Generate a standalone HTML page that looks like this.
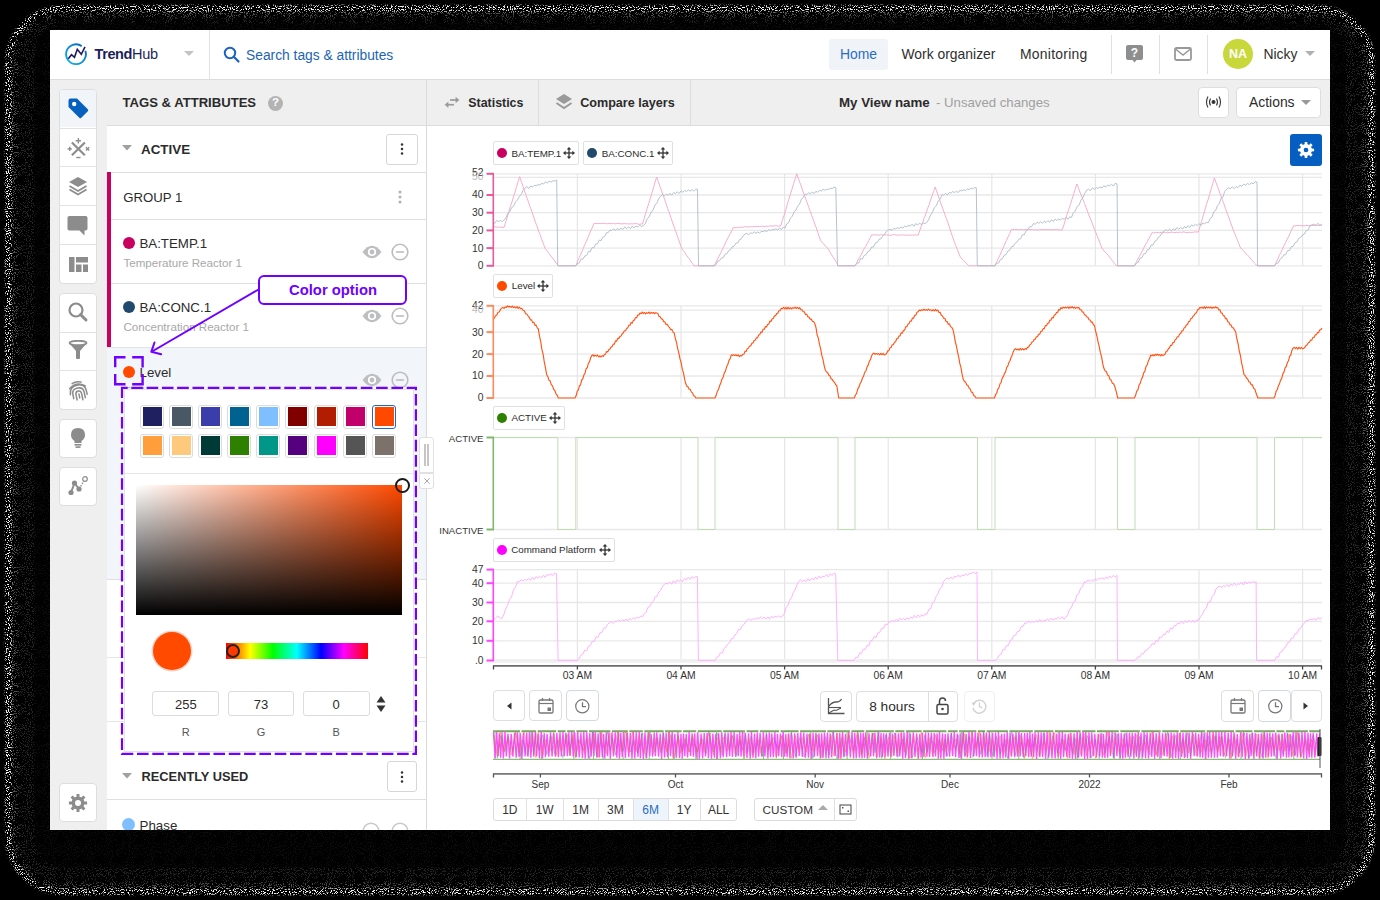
<!DOCTYPE html>
<html><head><meta charset="utf-8"><style>
html,body{margin:0;padding:0;}
body{width:1380px;height:900px;position:relative;overflow:hidden;background:#000;font-family:"Liberation Sans",sans-serif;}
.a{position:absolute;display:block;}
.t{position:absolute;white-space:nowrap;}
</style></head><body>
<svg class="a" style="left:0;top:0" width="1380" height="900" viewBox="0 0 1380 900">
<defs>
<filter id="nz" x="0" y="0" width="1380" height="900" filterUnits="userSpaceOnUse">
<feTurbulence type="fractalNoise" baseFrequency="0.95" numOctaves="2" seed="5" result="t"/>
<feColorMatrix in="t" type="matrix" values="0 0 0 0 1  0 0 0 0 1  0 0 0 0 1  14 0 0 0 -7.9"/>
</filter>
<filter id="bl" x="-5%" y="-5%" width="110%" height="110%"><feGaussianBlur stdDeviation="1.2"/></filter>
<mask id="mk" maskUnits="userSpaceOnUse" x="0" y="0" width="1380" height="900">
<g filter="url(#bl)">
<rect x="5" y="5" width="1370" height="890" rx="58" fill="#fff"/>
<rect x="11" y="11" width="1358" height="878" rx="52" fill="#505050"/>
<rect x="18" y="17" width="1344" height="866" rx="45" fill="#262626"/>
<rect x="34" y="23" width="1312" height="845" rx="30" fill="#101010"/>
</g>
</mask>
</defs>
<rect x="0" y="0" width="1380" height="900" fill="#000"/>
<g mask="url(#mk)"><rect x="0" y="0" width="1380" height="900" filter="url(#nz)"/></g>
</svg>
<div class="a" style="left:0;top:0;width:1380px;height:900px;clip-path:inset(30px 50px 70px 50px);"><div class="a" style="left:50px;top:30px;width:1280px;height:800px;background:#fff;"></div>
<div class="a" style="left:50px;top:79px;width:1280px;height:1px;background:#dcdcdc;"></div>
<svg class="a" style="left:64px;top:42px;" width="24" height="24" viewBox="0 0 24 24"><defs><linearGradient id="lg" x1="0" y1="1" x2="1" y2="0"><stop offset="0" stop-color="#16b4e2"/><stop offset="1" stop-color="#0a62c4"/></linearGradient></defs><path d="M21.3,8.8 A9.9,9.9 0 1 1 17.7,4.1" fill="none" stroke="url(#lg)" stroke-width="1.9"/><polyline points="4.3,16.7 7.5,12.7 10.5,15.3 13.3,7.3 17.3,12.3 21,4.8" fill="none" stroke="#1e1a5c" stroke-width="1.6" stroke-linejoin="miter"/></svg>
<div class="t" style="left:94.5px;top:47.43px;font-size:14.5px;line-height:14.5px;color:#1c1f5a;font-weight:400;"><b style="letter-spacing:-0.4px">Trend</b><span style="letter-spacing:-0.3px">Hub</span></div>
<svg class="a" style="left:184px;top:51px;" width="10" height="6" viewBox="0 0 10 6"><polygon points="0,0 10,0 5,5" fill="#c4c4c4"/></svg>
<div class="a" style="left:209px;top:30px;width:1px;height:49px;background:#e2e2e2;"></div>
<svg class="a" style="left:223px;top:46px;" width="18" height="18" viewBox="0 0 18 18"><circle cx="7" cy="7" r="5.2" fill="none" stroke="#1a63c0" stroke-width="2"/><line x1="10.8" y1="10.8" x2="15.5" y2="15.5" stroke="#1a63c0" stroke-width="2.2" stroke-linecap="round"/></svg>
<div class="t" style="left:246px;top:48.82px;font-size:13.8px;line-height:13.8px;color:#1d64b5;font-weight:400;">Search tags &amp; attributes</div>
<div class="a" style="left:829px;top:38.5px;width:59px;height:31.5px;background:#f0f4f9;border-radius:3px;"></div>
<div class="t" style="left:840px;top:48.23px;font-size:13.9px;line-height:13.9px;color:#2a6cc4;font-weight:400;">Home</div>
<div class="t" style="left:901.5px;top:48.23px;font-size:13.9px;line-height:13.9px;color:#2e2e2e;font-weight:400;">Work organizer</div>
<div class="t" style="left:1020px;top:48.23px;font-size:13.9px;line-height:13.9px;color:#2e2e2e;font-weight:400;letter-spacing:0.27px;">Monitoring</div>
<div class="a" style="left:1110.5px;top:35px;width:1px;height:38.5px;background:#e0e0e0;"></div>
<div class="a" style="left:1158.5px;top:35px;width:1px;height:38.5px;background:#e0e0e0;"></div>
<div class="a" style="left:1207px;top:35px;width:1px;height:38.5px;background:#e0e0e0;"></div>
<svg class="a" style="left:1126px;top:45px;" width="17" height="19" viewBox="0 0 17 19"><path d="M2,0 H15 Q17,0 17,2 V13 Q17,15 15,15 H10.5 L8.5,17.5 L6.5,15 H2 Q0,15 0,13 V2 Q0,0 2,0Z" fill="#8e8e8e"/><text x="8.5" y="12" font-family="Liberation Sans" font-weight="700" font-size="12" fill="#fff" text-anchor="middle">?</text></svg>
<svg class="a" style="left:1174px;top:47px;" width="18" height="14" viewBox="0 0 18 14"><rect x="1" y="1" width="16" height="12" rx="1.5" fill="none" stroke="#999" stroke-width="1.8"/><polyline points="1.5,2 9,8 16.5,2" fill="none" stroke="#999" stroke-width="1.6"/></svg>
<div class="a" style="left:1223px;top:39.3px;width:30px;height:30px;background:#c8d73a;border-radius:50%;"></div>
<div class="t" style="left:1038px;width:400px;text-align:center;top:48.42px;font-size:12.5px;line-height:12.5px;color:#fff;font-weight:700;">NA</div>
<div class="t" style="left:1263.5px;top:48.23px;font-size:13.9px;line-height:13.9px;color:#2e2e2e;font-weight:400;">Nicky</div>
<svg class="a" style="left:1305px;top:51px;" width="10" height="6" viewBox="0 0 10 6"><polygon points="0,0 10,0 5,5" fill="#b0b0b0"/></svg>
<div class="a" style="left:50px;top:80px;width:56px;height:750px;background:#efefef;"></div>
<div class="a" style="left:58.7px;top:88.8px;width:38.6px;height:194.8px;background:#fff;border:1px solid #dedede;border-radius:4px;box-sizing:border-box;"></div>
<div class="a" style="left:59px;top:127.6px;width:37.5px;height:1px;background:#e2e2e2;"></div>
<div class="a" style="left:59px;top:166.39999999999998px;width:37.5px;height:1px;background:#e2e2e2;"></div>
<div class="a" style="left:59px;top:205.2px;width:37.5px;height:1px;background:#e2e2e2;"></div>
<div class="a" style="left:59px;top:244.0px;width:37.5px;height:1px;background:#e2e2e2;"></div>
<div class="a" style="left:59.7px;top:89.8px;width:36.6px;height:37.5px;background:#f1f5fa;border-radius:3px 3px 0 0;"></div>
<div class="a" style="left:58.7px;top:292.8px;width:38.6px;height:116.9px;background:#fff;border:1px solid #dedede;border-radius:4px;box-sizing:border-box;"></div>
<div class="a" style="left:59px;top:331.5px;width:37.5px;height:1px;background:#e2e2e2;"></div>
<div class="a" style="left:59px;top:370.20000000000005px;width:37.5px;height:1px;background:#e2e2e2;"></div>
<div class="a" style="left:58.7px;top:418.6px;width:38.6px;height:39.699999999999996px;background:#fff;border:1px solid #dedede;border-radius:4px;box-sizing:border-box;"></div>
<div class="a" style="left:58.7px;top:466.6px;width:38.6px;height:39.0px;background:#fff;border:1px solid #dedede;border-radius:4px;box-sizing:border-box;"></div>
<div class="a" style="left:58.7px;top:782.6px;width:38.6px;height:39.4px;background:#fff;border:1px solid #dedede;border-radius:4px;box-sizing:border-box;"></div>
<svg class="a" style="left:67.3px;top:96.8px;" width="23" height="23" viewBox="0 0 23 23"><path d="M1.5,3.5 Q1.5,1.5 3.5,1.5 H10 L20.8,12.3 Q21.8,13.3 20.8,14.3 L14.3,20.8 Q13.3,21.8 12.3,20.8 L1.5,10 Z" fill="#0660be"/><circle cx="7.2" cy="7" r="2.2" fill="#fff"/></svg>
<svg class="a" style="left:66.3px;top:136px;" width="24" height="24" viewBox="0 0 24 24"><g transform="translate(0.5,1) scale(1.08)"><line x1="5" y1="5" x2="17" y2="17" stroke="#8c8c8c" stroke-width="2"/><line x1="17" y1="5" x2="5" y2="17" stroke="#8c8c8c" stroke-width="2"/><line x1="11" y1="1" x2="11" y2="6" stroke="#8c8c8c" stroke-width="1.3"/><line x1="8.5" y1="3.5" x2="13.5" y2="3.5" stroke="#8c8c8c" stroke-width="1.3"/><line x1="1" y1="11" x2="5" y2="11" stroke="#8c8c8c" stroke-width="1.3"/><line x1="3" y1="9" x2="3" y2="13" stroke="#8c8c8c" stroke-width="1.3"/><line x1="9" y1="19" x2="13" y2="19" stroke="#8c8c8c" stroke-width="1.3"/><line x1="18" y1="9.5" x2="21" y2="12.5" stroke="#8c8c8c" stroke-width="1.3"/><line x1="21" y1="9.5" x2="18" y2="12.5" stroke="#8c8c8c" stroke-width="1.3"/></g></svg>
<svg class="a" style="left:67.8px;top:176px;" width="20" height="20" viewBox="0 0 20 20"><polygon points="10,1 19,6 10,11 1,6" fill="#8c8c8c"/><polyline points="1.5,10 10,15 18.5,10" fill="none" stroke="#8c8c8c" stroke-width="1.8"/><polyline points="1.5,13.5 10,18.5 18.5,13.5" fill="none" stroke="#8c8c8c" stroke-width="1.8"/></svg>
<svg class="a" style="left:67px;top:214.5px;" width="22" height="22" viewBox="0 0 22 22"><path d="M2.3,1 H18.7 Q20.5,1 20.5,2.8 V13.8 Q20.5,15.6 18.7,15.6 H17.5 V20.5 L12.5,15.6 H2.3 Q0.5,15.6 0.5,13.8 V2.8 Q0.5,1 2.3,1Z" fill="#8c8c8c"/></svg>
<svg class="a" style="left:67.8px;top:256px;" width="20" height="18" viewBox="0 0 20 18"><rect x="1" y="1" width="5.5" height="15" fill="#8c8c8c"/><rect x="8" y="1" width="12.5" height="5.5" fill="#8c8c8c"/><rect x="8" y="8.5" width="5.5" height="7.5" fill="#8c8c8c"/><rect x="15" y="8.5" width="5.5" height="7.5" fill="#8c8c8c"/></svg>
<svg class="a" style="left:66.8px;top:301px;" width="22" height="22" viewBox="0 0 22 22"><circle cx="9" cy="9" r="6.5" fill="none" stroke="#8c8c8c" stroke-width="2.2"/><line x1="13.5" y1="13.5" x2="19" y2="19" stroke="#8c8c8c" stroke-width="3" stroke-linecap="round"/></svg>
<svg class="a" style="left:67.8px;top:340px;" width="20" height="20" viewBox="0 0 20 20"><ellipse cx="10" cy="3" rx="8.5" ry="2.2" fill="none" stroke="#8c8c8c" stroke-width="1.8"/><path d="M1.5,3.5 L8,11 V18.5 Q10,19.5 12,18.5 V11 L18.5,3.5 Q10,6.5 1.5,3.5Z" fill="#8c8c8c"/></svg>
<svg class="a" style="left:66.8px;top:378.5px;" width="23" height="24" viewBox="0 0 23 24"><g fill="none" stroke="#8c8c8c" stroke-width="1.5" stroke-linecap="round" transform="rotate(-12 11.5 13)"><path d="M7,3.5 Q11.5,1.5 16,3.8"/><path d="M3.5,8 Q11.5,2 19.5,8.5"/><path d="M3,14 Q3.5,6 11.5,6 Q19.5,6 19.5,14 V17"/><path d="M5.5,18.5 V14 Q5.5,9 11.5,9 Q17,9 17,14 V20"/><path d="M8.5,20.5 V15 Q8.5,12 11.5,12 Q14.2,12 14.2,15 V21.5"/><path d="M11.5,15 V19"/></g></svg>
<svg class="a" style="left:68.8px;top:427px;" width="18" height="22" viewBox="0 0 18 22"><path d="M9,1 Q16,1 16,8 Q16,11.5 12.5,14 V16 H5.5 V14 Q2,11.5 2,8 Q2,1 9,1Z" fill="#8c8c8c"/><rect x="5.5" y="17" width="7" height="1.6" fill="#8c8c8c"/><rect x="6.5" y="19.3" width="5" height="1.6" fill="#8c8c8c"/></svg>
<svg class="a" style="left:66.8px;top:475px;" width="22" height="22" viewBox="0 0 22 22"><circle cx="4" cy="17.5" r="2.6" fill="#8c8c8c"/><circle cx="7.5" cy="8" r="2.6" fill="#8c8c8c"/><circle cx="12" cy="14" r="2.6" fill="#8c8c8c"/><circle cx="18" cy="4" r="2.3" fill="none" stroke="#8c8c8c" stroke-width="1.2"/><line x1="4" y1="17.5" x2="7.5" y2="8" stroke="#8c8c8c" stroke-width="2"/><line x1="7.5" y1="8" x2="12" y2="14" stroke="#8c8c8c" stroke-width="2"/><line x1="12" y1="14" x2="17" y2="6" stroke="#8c8c8c" stroke-width="1.3" stroke-dasharray="1.5,1.5"/></svg>
<svg class="a" style="left:67.8px;top:793px;" width="20" height="20" viewBox="0 0 20 20"><path d="M16.11,8.47 L19.09,8.56 L19.09,11.44 L16.11,11.53 L15.40,13.24 L17.44,15.41 L15.41,17.44 L13.24,15.40 L11.53,16.11 L11.44,19.09 L8.56,19.09 L8.47,16.11 L6.76,15.40 L4.59,17.44 L2.56,15.41 L4.60,13.24 L3.89,11.53 L0.91,11.44 L0.91,8.56 L3.89,8.47 L4.60,6.76 L2.56,4.59 L4.59,2.56 L6.76,4.60 L8.47,3.89 L8.56,0.91 L11.44,0.91 L11.53,3.89 L13.24,4.60 L15.41,2.56 L17.44,4.59 L15.40,6.76Z" fill="#8c8c8c"/><circle cx="10" cy="10" r="6.3" fill="#8c8c8c"/><circle cx="10" cy="10" r="3" fill="#fff"/></svg>
<div class="a" style="left:106px;top:80px;width:320px;height:750px;background:#efefef;"></div>
<div class="a" style="left:426px;top:80px;width:1px;height:750px;background:#dadada;"></div>
<div class="t" style="left:122.5px;top:96.41px;font-size:13.1px;line-height:13.1px;color:#2b2b2b;font-weight:700;">TAGS &amp; ATTRIBUTES</div>
<div class="a" style="left:268px;top:95.5px;width:15px;height:15px;background:#b3b3b3;border-radius:50%;"></div>
<div class="t" style="left:75.5px;width:400px;text-align:center;top:97.47px;font-size:11.5px;line-height:11.5px;color:#fff;font-weight:700;">?</div>
<div class="a" style="left:106.5px;top:125px;width:319.5px;height:705px;background:#fff;"></div>
<div class="a" style="left:106.5px;top:125px;width:319.5px;height:1px;background:#dcdcdc;"></div>
<svg class="a" style="left:122px;top:145px;" width="11" height="7" viewBox="0 0 11 7"><polygon points="0,0 10,0 5,5.5" fill="#a0a0a0"/></svg>
<div class="t" style="left:141px;top:142.66px;font-size:13.4px;line-height:13.4px;color:#2b2b2b;font-weight:700;">ACTIVE</div>
<div class="a" style="left:386px;top:133.5px;width:31.5px;height:31px;background:#fff;border:1px solid #d6d6d6;border-radius:3px;box-sizing:border-box;"></div>
<svg class="a" style="left:398.7px;top:141px;" width="6" height="16" viewBox="0 0 6 16"><circle cx="3" cy="3.4000000000000004" r="1.25" fill="#333"/><circle cx="3" cy="8.0" r="1.25" fill="#333"/><circle cx="3" cy="12.6" r="1.25" fill="#333"/></svg>
<div class="a" style="left:106.5px;top:172px;width:319.5px;height:1px;background:#dedede;"></div>
<div class="a" style="left:106.5px;top:172px;width:4.5px;height:175.5px;background:#c8005f;"></div>
<div class="t" style="left:123.3px;top:190.83px;font-size:13.2px;line-height:13.2px;color:#2b2b2b;font-weight:400;">GROUP 1</div>
<svg class="a" style="left:397px;top:188.5px;" width="6" height="16" viewBox="0 0 6 16"><circle cx="3" cy="3" r="1.5" fill="#b0b0b0"/><circle cx="3" cy="8" r="1.5" fill="#b0b0b0"/><circle cx="3" cy="13" r="1.5" fill="#b0b0b0"/></svg>
<div class="a" style="left:111px;top:219px;width:315px;height:1px;background:#e0e0e0;"></div>
<div class="a" style="left:123px;top:237.3px;width:12px;height:12px;background:#c8005f;border-radius:50%;"></div>
<div class="t" style="left:139.4px;top:237.44px;font-size:13.3px;line-height:13.3px;color:#2b2b2b;font-weight:400;">BA:TEMP.1</div>
<div class="t" style="left:123.4px;top:256.88px;font-size:11.6px;line-height:11.6px;color:#a8a8a8;font-weight:400;">Temperature Reactor 1</div>
<svg class="a" style="left:362px;top:245px;" width="20" height="14" viewBox="0 0 20 14"><path d="M0.5,7 Q10,-5.5 19.5,7 Q10,19.5 0.5,7Z" fill="#bdbec0"/><circle cx="10" cy="7" r="4.1" fill="#fff"/><circle cx="10" cy="7" r="2.4" fill="#bdbec0"/></svg>
<svg class="a" style="left:391px;top:243px;" width="18" height="18" viewBox="0 0 18 18"><circle cx="9" cy="9" r="7.8" fill="none" stroke="#bdbdbd" stroke-width="1.6"/><line x1="5" y1="9" x2="13" y2="9" stroke="#bdbdbd" stroke-width="1.6"/></svg>
<div class="a" style="left:111px;top:283px;width:315px;height:1px;background:#e0e0e0;"></div>
<div class="a" style="left:123px;top:301.3px;width:12px;height:12px;background:#1f4a6e;border-radius:50%;"></div>
<div class="t" style="left:139.4px;top:301.44px;font-size:13.3px;line-height:13.3px;color:#2b2b2b;font-weight:400;">BA:CONC.1</div>
<div class="t" style="left:123.4px;top:320.88px;font-size:11.6px;line-height:11.6px;color:#a8a8a8;font-weight:400;">Concentration Reactor 1</div>
<svg class="a" style="left:362px;top:309px;" width="20" height="14" viewBox="0 0 20 14"><path d="M0.5,7 Q10,-5.5 19.5,7 Q10,19.5 0.5,7Z" fill="#bdbec0"/><circle cx="10" cy="7" r="4.1" fill="#fff"/><circle cx="10" cy="7" r="2.4" fill="#bdbec0"/></svg>
<svg class="a" style="left:391px;top:307px;" width="18" height="18" viewBox="0 0 18 18"><circle cx="9" cy="9" r="7.8" fill="none" stroke="#bdbdbd" stroke-width="1.6"/><line x1="5" y1="9" x2="13" y2="9" stroke="#bdbdbd" stroke-width="1.6"/></svg>
<div class="a" style="left:106.5px;top:347px;width:319.5px;height:1px;background:#dfe3ea;"></div>
<div class="a" style="left:106.5px;top:348px;width:319.5px;height:231px;background:#f2f5fa;"></div>
<div class="a" style="left:106.5px;top:579px;width:319.5px;height:1px;background:#dedede;"></div>
<div class="a" style="left:123px;top:365.5px;width:12px;height:12px;background:#ff4a00;border-radius:50%;"></div>
<div class="t" style="left:139.5px;top:365.74px;font-size:13.3px;line-height:13.3px;color:#2b2b2b;font-weight:400;">Level</div>
<div class="t" style="left:123.4px;top:385.18px;font-size:11.6px;line-height:11.6px;color:#a8a8a8;font-weight:400;">Tank Level</div>
<svg class="a" style="left:362px;top:373px;" width="20" height="14" viewBox="0 0 20 14"><path d="M0.5,7 Q10,-5.5 19.5,7 Q10,19.5 0.5,7Z" fill="#bdbec0"/><circle cx="10" cy="7" r="4.1" fill="#fff"/><circle cx="10" cy="7" r="2.4" fill="#bdbec0"/></svg>
<svg class="a" style="left:391px;top:371px;" width="18" height="18" viewBox="0 0 18 18"><circle cx="9" cy="9" r="7.8" fill="none" stroke="#bdbdbd" stroke-width="1.6"/><line x1="5" y1="9" x2="13" y2="9" stroke="#bdbdbd" stroke-width="1.6"/></svg>
<div class="a" style="left:106.5px;top:657px;width:319.5px;height:1px;background:#e6e6e6;"></div>
<div class="a" style="left:106.5px;top:721px;width:319.5px;height:1px;background:#e6e6e6;"></div>
<div class="a" style="left:106.5px;top:799px;width:319.5px;height:1px;background:#e0e0e0;"></div>
<svg class="a" style="left:122px;top:773px;" width="11" height="7" viewBox="0 0 11 7"><polygon points="0,0 10,0 5,5.5" fill="#a0a0a0"/></svg>
<div class="t" style="left:141.6px;top:771.36px;font-size:12.8px;line-height:12.8px;color:#2b2b2b;font-weight:700;">RECENTLY USED</div>
<div class="a" style="left:386.8px;top:761px;width:30.7px;height:31px;background:#fff;border:1px solid #d6d6d6;border-radius:3px;box-sizing:border-box;"></div>
<svg class="a" style="left:399px;top:768.5px;" width="6" height="16" viewBox="0 0 6 16"><circle cx="3" cy="3.4000000000000004" r="1.25" fill="#333"/><circle cx="3" cy="8.0" r="1.25" fill="#333"/><circle cx="3" cy="12.6" r="1.25" fill="#333"/></svg>
<div class="a" style="left:122px;top:818px;width:13px;height:13px;background:#80bfff;border-radius:50%;"></div>
<div class="t" style="left:139.6px;top:819.24px;font-size:13.3px;line-height:13.3px;color:#2b2b2b;font-weight:400;">Phase</div>
<svg class="a" style="left:362px;top:822px;" width="50" height="10" viewBox="0 0 50 10"><circle cx="9" cy="9" r="7.8" fill="none" stroke="#c8c8c8" stroke-width="1.6"/><circle cx="38" cy="9" r="7.8" fill="none" stroke="#c8c8c8" stroke-width="1.6"/></svg>
<div class="a" style="left:427px;top:80px;width:903px;height:45px;background:#efefef;"></div>
<div class="a" style="left:427px;top:125px;width:903px;height:1px;background:#dcdcdc;"></div>
<div class="a" style="left:537.8px;top:80px;width:1px;height:45px;background:#dcdcdc;"></div>
<div class="a" style="left:689.5px;top:80px;width:1px;height:45px;background:#dcdcdc;"></div>
<svg class="a" style="left:443px;top:95px;" width="18" height="15" viewBox="0 0 18 15"><line x1="7" y1="5" x2="14" y2="5" stroke="#9a9a9a" stroke-width="1.7"/><polygon points="16.3,5 12.6,1.8 12.6,8.2" fill="#9a9a9a"/><line x1="4" y1="9.7" x2="11" y2="9.7" stroke="#9a9a9a" stroke-width="1.7"/><polygon points="1.7,9.7 5.4,6.5 5.4,12.9" fill="#9a9a9a"/></svg>
<div class="t" style="left:468.3px;top:96.80px;font-size:12.4px;line-height:12.4px;color:#2b2b2b;font-weight:700;">Statistics</div>
<svg class="a" style="left:554.8px;top:93px;" width="18" height="19" viewBox="0 0 18 19"><polygon points="9,1 17,6 9,11 1,6" fill="#9a9a9a"/><polyline points="1.5,10 9,15 16.5,10" fill="none" stroke="#9a9a9a" stroke-width="2"/></svg>
<div class="t" style="left:580.2px;top:96.63px;font-size:12.6px;line-height:12.6px;color:#2b2b2b;font-weight:700;">Compare layers</div>
<div class="t" style="left:839px;top:96.04px;font-size:13.3px;line-height:13.3px;color:#2b2b2b;font-weight:700;">My View name</div>
<div class="t" style="left:936px;top:96.13px;font-size:13.2px;line-height:13.2px;color:#a0a0a0;font-weight:400;">- Unsaved changes</div>
<div class="a" style="left:1198px;top:87px;width:31px;height:30.599999999999994px;background:#fff;border:1px solid #dedede;border-radius:4px;box-sizing:border-box;"></div>
<svg class="a" style="left:1205px;top:95px;" width="17" height="14" viewBox="0 0 17 14"><circle cx="8.5" cy="7" r="2" fill="#333"/><path d="M5.5,3.5 Q3.5,7 5.5,10.5" fill="none" stroke="#333" stroke-width="1.1"/><path d="M11.5,3.5 Q13.5,7 11.5,10.5" fill="none" stroke="#333" stroke-width="1.1"/><path d="M3,1.5 Q0,7 3,12.5" fill="none" stroke="#333" stroke-width="1.1"/><path d="M14,1.5 Q17,7 14,12.5" fill="none" stroke="#333" stroke-width="1.1"/></svg>
<div class="a" style="left:1236px;top:87px;width:85.29999999999995px;height:30.599999999999994px;background:#fff;border:1px solid #dedede;border-radius:4px;box-sizing:border-box;"></div>
<div class="t" style="left:1249px;top:96.03px;font-size:13.9px;line-height:13.9px;color:#2b2b2b;font-weight:400;">Actions</div>
<svg class="a" style="left:1300.5px;top:99.5px;" width="10" height="6" viewBox="0 0 10 6"><polygon points="0,0 10,0 5,5" fill="#999"/></svg>
<div class="a" style="left:1290px;top:134px;width:32px;height:32px;background:#065ec0;border-radius:3px;"></div>
<svg class="a" style="left:1296px;top:140px;" width="20" height="20" viewBox="0 0 20 20"><path d="M15.63,8.59 L18.10,8.72 L18.10,11.28 L15.63,11.41 L14.97,12.98 L16.63,14.82 L14.82,16.63 L12.98,14.97 L11.41,15.63 L11.28,18.10 L8.72,18.10 L8.59,15.63 L7.02,14.97 L5.18,16.63 L3.37,14.82 L5.03,12.98 L4.37,11.41 L1.90,11.28 L1.90,8.72 L4.37,8.59 L5.03,7.02 L3.37,5.18 L5.18,3.37 L7.02,5.03 L8.59,4.37 L8.72,1.90 L11.28,1.90 L11.41,4.37 L12.98,5.03 L14.82,3.37 L16.63,5.18 L14.97,7.02Z" fill="#fff"/><circle cx="10" cy="10" r="5.8" fill="#fff"/><circle cx="10" cy="10" r="2.3" fill="#065ec0"/></svg>
<div class="a" style="left:493px;top:141.4px;width:86.29999999999995px;height:23.900000000000006px;background:#fff;border:1px solid #e0e0e0;border-radius:2px;box-sizing:border-box;"></div>
<div class="a" style="left:496.8px;top:148.35000000000002px;width:10px;height:10px;background:#c8005f;border-radius:50%;"></div>
<div class="t" style="left:511.4px;top:148.65px;font-size:9.8px;line-height:9.8px;color:#2b2b2b;font-weight:400;">BA:TEMP.1</div>
<svg class="a" style="left:563.3px;top:147.35000000000002px;" width="12" height="12" viewBox="0 0 12 12"><line x1="6" y1="1.5" x2="6" y2="10.5" stroke="#333" stroke-width="1.3"/><line x1="1.5" y1="6" x2="10.5" y2="6" stroke="#333" stroke-width="1.3"/><polygon points="6,0 8.3,2.6 3.7,2.6" fill="#333"/><polygon points="6,12 8.3,9.4 3.7,9.4" fill="#333"/><polygon points="0,6 2.6,3.7 2.6,8.3" fill="#333"/><polygon points="12,6 9.4,3.7 9.4,8.3" fill="#333"/></svg>
<div class="a" style="left:583.3px;top:141.4px;width:89.60000000000002px;height:23.900000000000006px;background:#fff;border:1px solid #e0e0e0;border-radius:2px;box-sizing:border-box;"></div>
<div class="a" style="left:587.0999999999999px;top:148.35000000000002px;width:10px;height:10px;background:#1f4a6e;border-radius:50%;"></div>
<div class="t" style="left:601.6999999999999px;top:148.65px;font-size:9.8px;line-height:9.8px;color:#2b2b2b;font-weight:400;">BA:CONC.1</div>
<svg class="a" style="left:656.9px;top:147.35000000000002px;" width="12" height="12" viewBox="0 0 12 12"><line x1="6" y1="1.5" x2="6" y2="10.5" stroke="#333" stroke-width="1.3"/><line x1="1.5" y1="6" x2="10.5" y2="6" stroke="#333" stroke-width="1.3"/><polygon points="6,0 8.3,2.6 3.7,2.6" fill="#333"/><polygon points="6,12 8.3,9.4 3.7,9.4" fill="#333"/><polygon points="0,6 2.6,3.7 2.6,8.3" fill="#333"/><polygon points="12,6 9.4,3.7 9.4,8.3" fill="#333"/></svg>
<div class="a" style="left:493.4px;top:273.8px;width:59.200000000000045px;height:24.099999999999966px;background:#fff;border:1px solid #e0e0e0;border-radius:2px;box-sizing:border-box;"></div>
<div class="a" style="left:497.2px;top:280.85px;width:10px;height:10px;background:#ff4a00;border-radius:50%;"></div>
<div class="t" style="left:511.79999999999995px;top:281.15px;font-size:9.8px;line-height:9.8px;color:#2b2b2b;font-weight:400;">Level</div>
<svg class="a" style="left:536.6px;top:279.85px;" width="12" height="12" viewBox="0 0 12 12"><line x1="6" y1="1.5" x2="6" y2="10.5" stroke="#333" stroke-width="1.3"/><line x1="1.5" y1="6" x2="10.5" y2="6" stroke="#333" stroke-width="1.3"/><polygon points="6,0 8.3,2.6 3.7,2.6" fill="#333"/><polygon points="6,12 8.3,9.4 3.7,9.4" fill="#333"/><polygon points="0,6 2.6,3.7 2.6,8.3" fill="#333"/><polygon points="12,6 9.4,3.7 9.4,8.3" fill="#333"/></svg>
<div class="a" style="left:493px;top:405.8px;width:72px;height:24.0px;background:#fff;border:1px solid #e0e0e0;border-radius:2px;box-sizing:border-box;"></div>
<div class="a" style="left:496.8px;top:412.8px;width:10px;height:10px;background:#2e8000;border-radius:50%;"></div>
<div class="t" style="left:511.4px;top:413.10px;font-size:9.8px;line-height:9.8px;color:#2b2b2b;font-weight:400;">ACTIVE</div>
<svg class="a" style="left:549px;top:411.8px;" width="12" height="12" viewBox="0 0 12 12"><line x1="6" y1="1.5" x2="6" y2="10.5" stroke="#333" stroke-width="1.3"/><line x1="1.5" y1="6" x2="10.5" y2="6" stroke="#333" stroke-width="1.3"/><polygon points="6,0 8.3,2.6 3.7,2.6" fill="#333"/><polygon points="6,12 8.3,9.4 3.7,9.4" fill="#333"/><polygon points="0,6 2.6,3.7 2.6,8.3" fill="#333"/><polygon points="12,6 9.4,3.7 9.4,8.3" fill="#333"/></svg>
<div class="a" style="left:492.8px;top:538px;width:122.09999999999997px;height:23.5px;background:#fff;border:1px solid #e0e0e0;border-radius:2px;box-sizing:border-box;"></div>
<div class="a" style="left:496.6px;top:544.75px;width:10px;height:10px;background:#ff00ff;border-radius:50%;"></div>
<div class="t" style="left:511.2px;top:545.05px;font-size:9.8px;line-height:9.8px;color:#2b2b2b;font-weight:400;">Command Platform</div>
<svg class="a" style="left:598.9px;top:543.75px;" width="12" height="12" viewBox="0 0 12 12"><line x1="6" y1="1.5" x2="6" y2="10.5" stroke="#333" stroke-width="1.3"/><line x1="1.5" y1="6" x2="10.5" y2="6" stroke="#333" stroke-width="1.3"/><polygon points="6,0 8.3,2.6 3.7,2.6" fill="#333"/><polygon points="6,12 8.3,9.4 3.7,9.4" fill="#333"/><polygon points="0,6 2.6,3.7 2.6,8.3" fill="#333"/><polygon points="12,6 9.4,3.7 9.4,8.3" fill="#333"/></svg>
<svg class="a" style="left:0px;top:0px;pointer-events:none;" width="1380" height="900" viewBox="0 0 1380 900"><line x1="493" y1="173.8" x2="1322" y2="173.8" stroke="#e8e8e8" stroke-width="1.3"/><line x1="493" y1="177.3" x2="1322" y2="177.3" stroke="#e8e8e8" stroke-width="1.3"/><line x1="493" y1="195" x2="1322" y2="195" stroke="#e8e8e8" stroke-width="1.3"/><line x1="493" y1="212.7" x2="1322" y2="212.7" stroke="#e8e8e8" stroke-width="1.3"/><line x1="493" y1="230.4" x2="1322" y2="230.4" stroke="#e8e8e8" stroke-width="1.3"/><line x1="493" y1="248.1" x2="1322" y2="248.1" stroke="#e8e8e8" stroke-width="1.3"/><line x1="493" y1="265.8" x2="1322" y2="265.8" stroke="#e8e8e8" stroke-width="1.3"/><line x1="577.4" y1="173.8" x2="577.4" y2="265.8" stroke="#e6e6e6" stroke-width="1.2"/><line x1="681.0" y1="173.8" x2="681.0" y2="265.8" stroke="#e6e6e6" stroke-width="1.2"/><line x1="784.5999999999999" y1="173.8" x2="784.5999999999999" y2="265.8" stroke="#e6e6e6" stroke-width="1.2"/><line x1="888.1999999999999" y1="173.8" x2="888.1999999999999" y2="265.8" stroke="#e6e6e6" stroke-width="1.2"/><line x1="991.8" y1="173.8" x2="991.8" y2="265.8" stroke="#e6e6e6" stroke-width="1.2"/><line x1="1095.4" y1="173.8" x2="1095.4" y2="265.8" stroke="#e6e6e6" stroke-width="1.2"/><line x1="1199.0" y1="173.8" x2="1199.0" y2="265.8" stroke="#e6e6e6" stroke-width="1.2"/><line x1="1302.6" y1="173.8" x2="1302.6" y2="265.8" stroke="#e6e6e6" stroke-width="1.2"/><path d="M493.0,226.7 L494.6,226.6 L496.1,227.2 L497.7,227.2 L499.3,227.0 L500.9,227.3 L502.4,227.4 L504.0,227.5 L505.6,222.5 L507.1,217.5 L508.7,212.0 L510.3,206.8 L511.9,202.3 L513.4,197.0 L515.0,192.1 L516.6,186.5 L518.1,181.7 L519.7,176.7 L521.4,181.9 L523.1,186.5 L524.9,192.0 L526.6,197.0 L528.3,201.4 L530.0,206.7 L531.7,211.0 L533.3,216.0 L535.0,221.0 L536.6,225.3 L538.3,230.0 L540.0,234.4 L541.6,239.1 L543.3,243.4 L545.0,248.3 L546.7,250.3 L548.3,252.6 L550.0,254.9 L551.6,256.9 L553.3,259.0 L555.0,261.2 L556.6,263.6 L558.3,265.8 L559.9,265.8 L561.5,265.8 L563.1,265.8 L564.7,265.8 L566.3,265.8 L567.8,265.8 L569.4,265.8 L571.0,265.8 L572.6,265.8 L574.2,265.8 L575.8,265.8 L577.3,262.1 L578.8,258.4 L580.3,255.4 L581.9,251.7 L583.4,248.2 L584.9,244.3 L586.4,241.4 L587.9,237.7 L589.5,233.7 L591.0,230.3 L592.5,227.0 L594.0,223.3 L595.5,223.5 L597.0,223.6 L598.5,223.3 L600.1,223.6 L601.6,223.5 L603.1,223.3 L604.6,223.5 L606.1,223.7 L607.6,223.7 L609.2,223.5 L610.7,223.6 L612.2,223.2 L613.7,223.4 L615.2,223.8 L616.7,223.6 L618.2,223.4 L619.8,223.7 L621.3,223.8 L622.8,223.8 L624.3,223.6 L625.8,223.7 L627.3,223.8 L628.9,224.0 L630.4,223.8 L631.9,223.8 L633.4,223.9 L634.9,223.6 L636.4,223.6 L638.0,224.1 L639.5,224.3 L641.0,224.0 L642.5,224.0 L644.1,218.7 L645.7,213.3 L647.2,208.3 L648.8,203.4 L650.4,198.1 L652.0,192.7 L653.5,187.7 L655.1,182.0 L656.7,177.0 L658.3,181.5 L659.8,186.2 L661.4,190.4 L663.0,194.8 L664.5,199.1 L666.1,203.8 L667.6,208.5 L669.2,212.3 L670.8,217.3 L672.3,221.8 L673.9,226.3 L675.5,230.6 L677.0,235.1 L678.6,239.4 L680.1,243.9 L681.7,248.3 L683.2,250.4 L684.8,252.4 L686.3,255.1 L687.9,257.1 L689.4,259.0 L690.9,261.4 L692.5,263.6 L694.0,265.8 L695.6,265.8 L697.1,265.8 L698.7,265.8 L700.2,265.8 L701.8,265.8 L703.3,265.8 L704.9,265.8 L706.4,265.8 L708.0,265.8 L709.5,265.8 L711.1,265.8 L712.6,265.8 L714.2,265.8 L715.8,262.5 L717.4,259.3 L719.0,256.3 L720.6,253.1 L722.2,249.9 L723.8,246.6 L725.3,243.1 L726.9,240.1 L728.5,236.8 L730.1,233.9 L731.7,230.9 L733.3,227.5 L734.8,227.7 L736.4,227.6 L737.9,227.6 L739.4,227.1 L741.0,227.5 L742.5,227.3 L744.0,226.8 L745.6,226.7 L747.1,226.7 L748.6,227.1 L750.2,226.7 L751.7,226.6 L753.2,226.9 L754.8,226.6 L756.3,226.4 L757.8,226.4 L759.3,226.6 L760.9,226.3 L762.4,226.3 L763.9,226.6 L765.5,226.3 L767.0,226.2 L768.5,226.2 L770.1,225.9 L771.6,226.0 L773.1,226.0 L774.7,225.8 L776.2,225.7 L777.7,226.2 L779.3,225.9 L780.8,225.8 L782.4,220.4 L784.0,215.5 L785.6,210.4 L787.2,204.6 L788.8,199.4 L790.3,194.3 L791.9,189.5 L793.5,183.9 L795.1,179.1 L796.7,173.7 L798.2,178.0 L799.7,182.1 L801.2,186.1 L802.7,190.8 L804.2,194.9 L805.7,198.9 L807.2,202.9 L808.8,207.4 L810.3,211.4 L811.8,215.7 L813.3,219.7 L814.8,224.1 L816.3,227.9 L817.8,232.3 L819.3,236.9 L820.8,240.8 L822.3,242.7 L823.8,243.9 L825.3,246.0 L826.8,247.2 L828.3,249.0 L830.0,252.1 L831.6,254.8 L833.3,257.3 L835.0,260.0 L836.6,262.7 L838.3,265.8 L839.8,265.8 L841.3,265.8 L842.9,265.8 L844.4,265.8 L845.9,265.8 L847.4,265.8 L848.9,265.8 L850.4,265.8 L852.0,265.8 L853.5,265.8 L855.0,265.8 L856.5,263.3 L858.0,259.9 L859.6,257.6 L861.1,254.9 L862.6,251.8 L864.1,248.8 L865.6,246.5 L867.1,243.7 L868.7,240.7 L870.2,237.8 L871.7,235.0 L873.2,234.9 L874.7,234.9 L876.2,234.8 L877.7,235.1 L879.2,235.0 L880.7,234.8 L882.2,234.7 L883.7,235.1 L885.2,234.9 L886.7,235.0 L888.2,234.9 L889.7,235.3 L891.2,235.3 L892.7,234.7 L894.2,234.8 L895.8,234.9 L897.3,235.3 L898.8,235.2 L900.3,234.9 L901.8,234.8 L903.3,235.1 L904.8,235.2 L906.3,235.3 L907.8,234.9 L909.3,235.3 L910.8,235.1 L912.3,235.0 L913.8,235.3 L915.3,234.8 L916.8,235.2 L918.3,235.0 L919.8,230.3 L921.4,226.0 L922.9,222.2 L924.4,217.3 L926.0,213.4 L927.5,208.9 L929.1,204.7 L930.6,200.0 L932.1,195.6 L933.7,191.2 L935.2,187.0 L936.8,191.8 L938.4,196.1 L940.0,200.9 L941.5,205.3 L943.1,209.3 L944.7,214.1 L946.3,218.3 L947.9,222.8 L949.5,227.3 L951.0,232.4 L952.6,236.9 L954.2,241.4 L955.8,245.7 L957.3,249.4 L958.8,253.3 L960.3,257.0 L962.0,259.0 L963.7,260.4 L965.3,262.3 L967.0,263.8 L968.7,265.8 L970.2,265.8 L971.8,265.8 L973.3,265.8 L974.9,265.8 L976.4,265.8 L978.0,265.8 L979.5,265.8 L981.1,265.8 L982.6,265.8 L984.2,265.8 L985.7,265.8 L987.3,265.8 L988.8,265.8 L990.4,265.8 L991.9,265.8 L993.5,265.8 L995.0,265.8 L996.6,261.9 L998.3,258.4 L999.9,255.2 L1001.5,251.4 L1003.1,248.0 L1004.8,244.1 L1006.4,240.4 L1008.0,237.1 L1009.7,233.5 L1011.3,229.7 L1012.8,229.4 L1014.3,229.8 L1015.8,229.4 L1017.3,229.4 L1018.8,230.0 L1020.3,229.4 L1021.8,229.5 L1023.3,230.0 L1024.8,229.6 L1026.3,229.4 L1027.8,229.5 L1029.3,229.5 L1030.8,229.9 L1032.3,229.4 L1033.8,230.0 L1035.3,229.6 L1036.8,230.0 L1038.3,230.0 L1039.8,229.6 L1041.3,229.5 L1042.8,229.7 L1044.3,229.4 L1045.8,229.8 L1047.3,229.4 L1048.8,229.4 L1050.3,230.0 L1051.8,229.6 L1053.3,229.8 L1054.8,229.7 L1056.3,229.6 L1057.8,229.4 L1059.3,230.0 L1060.8,230.0 L1062.3,229.7 L1063.9,225.0 L1065.5,219.3 L1067.1,214.3 L1068.7,209.5 L1070.4,204.6 L1072.0,199.3 L1073.6,194.3 L1075.2,189.2 L1076.8,184.0 L1078.4,187.8 L1079.9,192.0 L1081.5,195.9 L1083.1,199.8 L1084.6,203.7 L1086.2,207.8 L1087.8,212.3 L1089.3,216.0 L1090.9,220.1 L1092.5,224.1 L1094.1,228.3 L1095.6,231.9 L1097.2,235.9 L1098.8,239.9 L1100.3,243.9 L1101.9,248.0 L1103.4,250.0 L1104.9,251.9 L1106.5,253.3 L1108.0,255.1 L1109.5,257.0 L1111.2,259.2 L1112.9,261.5 L1114.6,263.7 L1116.3,265.8 L1117.8,265.8 L1119.3,265.8 L1120.8,265.8 L1122.4,265.8 L1123.9,265.8 L1125.4,265.8 L1126.9,265.8 L1128.4,265.8 L1130.0,265.8 L1131.5,265.8 L1133.0,265.8 L1134.5,265.8 L1136.1,262.6 L1137.7,259.4 L1139.3,256.6 L1140.9,253.5 L1142.5,250.8 L1144.0,247.4 L1145.6,244.4 L1147.2,241.8 L1148.8,238.6 L1150.4,235.9 L1152.0,232.7 L1153.5,232.7 L1155.1,232.9 L1156.6,232.4 L1158.2,232.6 L1159.7,232.8 L1161.3,232.3 L1162.8,232.9 L1164.4,232.3 L1165.9,232.7 L1167.5,232.8 L1169.0,232.7 L1170.6,232.3 L1172.1,232.1 L1173.7,232.4 L1175.2,232.6 L1176.7,232.2 L1178.3,232.6 L1179.8,232.0 L1181.4,232.5 L1182.9,231.9 L1184.5,232.1 L1186.0,232.5 L1187.6,232.4 L1189.1,232.4 L1190.7,232.4 L1192.2,232.3 L1193.8,232.2 L1195.3,231.8 L1196.9,232.0 L1198.4,232.0 L1200.0,226.4 L1201.6,221.4 L1203.2,215.9 L1204.8,210.2 L1206.4,204.7 L1208.0,199.9 L1209.6,194.4 L1211.2,188.8 L1212.8,183.4 L1214.4,178.0 L1216.0,182.6 L1217.6,186.7 L1219.2,191.0 L1220.7,195.4 L1222.3,199.7 L1223.9,203.9 L1225.5,208.7 L1227.1,212.9 L1228.7,217.3 L1230.2,221.4 L1231.8,225.9 L1233.4,230.4 L1235.1,234.3 L1236.8,238.5 L1238.5,242.8 L1240.2,247.2 L1241.7,249.1 L1243.3,250.5 L1244.8,252.2 L1246.3,254.0 L1247.8,255.5 L1249.4,257.0 L1250.9,259.1 L1252.4,260.7 L1253.9,262.5 L1255.5,264.1 L1257.0,265.8 L1258.6,265.8 L1260.2,265.8 L1261.8,265.8 L1263.4,265.8 L1265.0,265.8 L1266.5,265.8 L1268.1,265.8 L1269.7,265.8 L1271.3,265.8 L1272.9,265.8 L1274.5,265.8 L1276.1,262.6 L1277.7,259.3 L1279.2,255.6 L1280.8,252.5 L1282.4,249.2 L1284.0,245.7 L1285.6,242.5 L1287.2,239.2 L1288.8,236.2 L1290.3,232.8 L1291.9,229.1 L1293.5,225.9 L1295.0,226.0 L1296.5,225.5 L1298.0,225.5 L1299.5,225.7 L1301.0,225.9 L1302.5,225.4 L1304.0,225.8 L1305.5,225.8 L1307.0,225.3 L1308.5,225.6 L1310.0,225.6 L1311.5,225.2 L1313.0,225.4 L1314.5,225.4 L1316.0,225.3 L1317.5,225.4 L1319.0,225.4 L1320.5,225.4 L1322.0,225.0" fill="none" stroke="#f5a9c8" stroke-width="0.95"/><path d="M493.0,222.5 L494.8,223.3 L496.7,220.4 L498.5,221.6 L500.3,220.5 L502.2,221.5 L504.0,220.0 L505.9,218.1 L507.8,213.3 L509.7,211.9 L511.6,207.6 L513.5,206.5 L515.5,201.8 L517.4,200.3 L519.3,196.2 L521.2,194.7 L523.1,190.2 L525.0,188.3 L526.9,186.5 L528.7,188.6 L530.6,186.0 L532.5,187.1 L534.3,185.3 L536.2,185.7 L538.1,184.6 L539.9,185.1 L541.8,183.3 L543.6,184.1 L545.5,181.7 L547.4,183.2 L549.2,181.1 L551.1,182.0 L553.0,180.7 L554.8,181.1 L556.7,180.0 L557.7,265.8 L559.5,265.8 L561.3,265.8 L563.1,265.8 L564.9,265.8 L566.8,265.8 L568.6,265.8 L570.4,265.8 L572.2,265.8 L574.0,265.8 L575.8,265.8 L577.6,263.5 L579.4,262.8 L581.2,258.8 L583.0,259.2 L584.8,255.9 L586.6,255.7 L588.4,251.5 L590.2,251.8 L592.0,247.6 L593.8,248.0 L595.6,244.0 L597.4,243.8 L599.2,240.0 L601.0,240.7 L602.8,237.1 L604.6,236.7 L606.4,232.8 L608.2,232.6 L610.0,230.0 L611.9,230.6 L613.7,228.8 L615.5,230.5 L617.4,228.3 L619.2,230.0 L621.1,228.0 L622.9,229.5 L624.8,226.9 L626.6,228.6 L628.5,226.8 L630.4,228.7 L632.2,226.2 L634.0,227.7 L635.9,226.2 L637.8,227.1 L639.6,225.3 L641.4,226.5 L643.3,225.8 L645.2,223.7 L647.2,218.6 L649.1,217.0 L651.1,211.9 L653.0,210.4 L655.0,204.8 L656.9,203.3 L658.9,198.3 L660.8,195.8 L662.6,194.5 L664.5,196.0 L666.3,194.2 L668.1,195.0 L670.0,193.4 L671.8,195.1 L673.6,192.6 L675.5,193.5 L677.3,191.7 L679.1,193.5 L681.0,191.0 L682.8,192.3 L684.7,190.5 L686.5,191.5 L688.3,189.9 L690.2,191.1 L692.0,189.7 L693.8,191.0 L695.7,189.2 L697.5,189.2 L698.5,265.8 L700.5,265.8 L702.4,265.8 L704.4,265.8 L706.4,265.8 L708.3,265.8 L710.3,265.8 L712.2,265.8 L714.2,265.8 L716.0,264.7 L717.8,260.9 L719.6,260.7 L721.4,257.9 L723.3,257.7 L725.1,253.9 L726.9,253.8 L728.7,250.6 L730.5,249.7 L732.3,246.8 L734.1,246.3 L735.9,243.1 L737.8,242.9 L739.6,239.5 L741.4,238.9 L743.2,235.8 L745.0,234.2 L746.8,233.4 L748.6,234.7 L750.5,232.9 L752.3,233.5 L754.1,231.8 L755.9,233.2 L757.7,231.9 L759.5,233.2 L761.4,231.2 L763.2,231.7 L765.0,230.5 L766.8,231.7 L768.6,229.5 L770.5,230.6 L772.3,229.4 L774.1,230.0 L775.9,228.7 L777.7,230.2 L779.5,227.8 L781.4,229.8 L783.2,227.2 L785.0,228.0 L786.8,223.8 L788.6,222.8 L790.5,218.0 L792.3,216.2 L794.1,211.7 L795.9,210.2 L797.7,206.1 L799.5,204.1 L801.4,199.2 L803.2,197.7 L805.0,194.2 L806.8,194.7 L808.6,192.7 L810.4,193.8 L812.2,192.2 L814.1,193.5 L815.9,191.3 L817.7,192.3 L819.5,190.4 L821.3,190.9 L823.1,189.4 L824.9,190.3 L826.7,189.2 L828.6,189.4 L830.4,188.3 L832.2,188.6 L834.0,187.0 L835.8,187.5 L837.5,265.8 L839.4,265.8 L841.4,265.8 L843.3,265.8 L845.3,265.8 L847.2,265.8 L849.2,265.8 L851.1,265.8 L853.1,265.8 L855.0,265.8 L856.9,263.0 L858.7,263.1 L860.5,258.6 L862.4,259.1 L864.2,255.4 L866.1,254.6 L867.9,251.4 L869.8,250.8 L871.6,247.0 L873.5,247.0 L875.4,242.9 L877.2,242.5 L879.0,239.2 L880.9,238.8 L882.8,235.7 L884.6,234.3 L886.4,231.3 L888.3,230.0 L890.1,229.3 L892.0,230.3 L893.8,228.4 L895.6,228.9 L897.4,227.8 L899.3,228.4 L901.1,227.0 L902.9,227.9 L904.8,226.0 L906.6,227.0 L908.4,225.1 L910.2,226.2 L912.1,224.2 L913.9,226.3 L915.7,223.6 L917.6,225.0 L919.4,223.1 L921.2,224.4 L923.0,222.9 L924.9,223.6 L926.7,222.5 L928.6,219.8 L930.5,215.1 L932.4,212.4 L934.4,207.5 L936.3,205.8 L938.2,200.9 L940.1,199.4 L942.0,194.7 L943.8,195.2 L945.6,193.4 L947.4,194.9 L949.2,192.6 L951.0,193.2 L952.8,191.5 L954.6,192.5 L956.4,191.2 L958.2,192.6 L960.1,190.1 L961.9,191.0 L963.7,189.6 L965.5,190.7 L967.3,188.9 L969.1,189.7 L970.9,188.0 L972.7,188.9 L974.5,187.6 L976.3,187.8 L977.3,265.8 L979.3,265.8 L981.2,265.8 L983.2,265.8 L985.2,265.8 L987.1,265.8 L989.1,265.8 L991.1,265.8 L993.0,265.8 L995.0,265.8 L996.8,263.1 L998.7,263.0 L1000.5,259.4 L1002.3,258.8 L1004.1,255.3 L1006.0,254.6 L1007.8,251.1 L1009.6,250.5 L1011.5,246.7 L1013.3,246.4 L1015.1,243.3 L1016.9,242.1 L1018.8,239.3 L1020.6,238.8 L1022.4,234.7 L1024.3,234.9 L1026.1,230.7 L1027.9,229.9 L1029.7,226.7 L1031.6,226.7 L1033.4,223.6 L1035.2,224.3 L1037.0,222.2 L1038.8,223.4 L1040.6,221.7 L1042.4,223.2 L1044.3,221.3 L1046.1,222.4 L1047.9,220.5 L1049.7,222.2 L1051.5,219.6 L1053.3,221.6 L1055.1,219.0 L1056.9,220.4 L1058.7,219.0 L1060.5,220.0 L1062.4,218.4 L1064.2,219.4 L1066.0,217.4 L1067.8,219.3 L1069.6,216.9 L1071.4,217.5 L1073.3,213.0 L1075.2,211.0 L1077.1,206.6 L1079.1,205.1 L1081.0,200.0 L1082.9,197.6 L1084.8,193.2 L1086.7,190.1 L1088.6,189.4 L1090.5,190.5 L1092.4,187.7 L1094.3,189.5 L1096.2,187.8 L1098.1,188.4 L1100.0,186.9 L1101.9,188.0 L1103.8,185.7 L1105.7,187.0 L1107.6,185.1 L1109.5,185.9 L1111.4,184.3 L1113.3,186.0 L1115.2,183.3 L1117.1,184.0 L1117.6,265.8 L1119.5,265.8 L1121.4,265.8 L1123.2,265.8 L1125.1,265.8 L1127.0,265.8 L1128.9,265.8 L1130.7,265.8 L1132.6,265.8 L1134.5,265.8 L1136.3,263.3 L1138.2,262.3 L1140.0,258.3 L1141.9,257.7 L1143.7,253.8 L1145.6,253.6 L1147.4,249.7 L1149.2,249.2 L1151.1,245.0 L1152.9,245.2 L1154.8,241.2 L1156.6,240.3 L1158.5,237.0 L1160.3,235.8 L1162.2,232.5 L1164.0,231.2 L1165.8,229.7 L1167.7,230.9 L1169.5,229.4 L1171.4,230.6 L1173.2,228.8 L1175.1,230.1 L1176.9,227.5 L1178.8,229.4 L1180.6,227.3 L1182.5,229.0 L1184.3,226.7 L1186.2,228.0 L1188.0,225.7 L1189.8,227.4 L1191.7,224.8 L1193.5,226.1 L1195.4,224.3 L1197.2,225.6 L1199.1,223.6 L1200.9,225.5 L1202.8,222.9 L1204.6,223.8 L1206.5,222.4 L1208.3,222.8 L1210.1,218.5 L1211.9,217.3 L1213.8,211.8 L1215.6,210.5 L1217.4,205.8 L1219.2,204.0 L1221.0,198.4 L1222.9,197.0 L1224.7,191.5 L1226.5,189.4 L1228.4,187.8 L1230.3,188.8 L1232.2,186.9 L1234.1,188.6 L1236.0,186.6 L1237.9,187.7 L1239.8,185.3 L1241.8,186.2 L1243.7,184.1 L1245.6,185.2 L1247.5,183.4 L1249.4,184.6 L1251.3,182.9 L1253.2,183.8 L1255.1,181.7 L1257.0,182.0 L1257.5,265.8 L1259.4,265.8 L1261.3,265.8 L1263.2,265.8 L1265.1,265.8 L1266.9,265.8 L1268.8,265.8 L1270.7,265.8 L1272.6,265.8 L1274.5,265.8 L1276.4,263.3 L1278.2,263.0 L1280.1,259.3 L1282.0,257.9 L1283.8,254.8 L1285.7,254.7 L1287.6,250.6 L1289.4,250.5 L1291.3,246.7 L1293.2,246.4 L1295.0,242.8 L1296.9,241.9 L1298.7,238.5 L1300.6,237.5 L1302.5,234.9 L1304.3,234.2 L1306.2,230.7 L1308.1,230.1 L1309.9,226.0 L1311.8,225.0 L1313.8,224.1 L1315.9,225.6 L1317.9,223.3 L1320.0,225.4 L1322.0,224.0" fill="none" stroke="#aebbc8" stroke-width="0.9"/><line x1="493.3" y1="173.8" x2="493.3" y2="265.8" stroke="#e8599c" stroke-width="1.6"/><line x1="486.5" y1="173.8" x2="494" y2="173.8" stroke="#e8599c" stroke-width="2"/><line x1="486.5" y1="195" x2="494" y2="195" stroke="#e8599c" stroke-width="2"/><line x1="486.5" y1="212.7" x2="494" y2="212.7" stroke="#e8599c" stroke-width="2"/><line x1="486.5" y1="230.4" x2="494" y2="230.4" stroke="#e8599c" stroke-width="2"/><line x1="486.5" y1="248.1" x2="494" y2="248.1" stroke="#e8599c" stroke-width="2"/><line x1="486.5" y1="265.8" x2="494" y2="265.8" stroke="#e8599c" stroke-width="2"/><line x1="493" y1="305.8" x2="1322" y2="305.8" stroke="#e8e8e8" stroke-width="1.3"/><line x1="493" y1="310.2" x2="1322" y2="310.2" stroke="#e8e8e8" stroke-width="1.3"/><line x1="493" y1="332.1" x2="1322" y2="332.1" stroke="#e8e8e8" stroke-width="1.3"/><line x1="493" y1="354.1" x2="1322" y2="354.1" stroke="#e8e8e8" stroke-width="1.3"/><line x1="493" y1="376" x2="1322" y2="376" stroke="#e8e8e8" stroke-width="1.3"/><line x1="493" y1="398" x2="1322" y2="398" stroke="#e8e8e8" stroke-width="1.3"/><line x1="577.4" y1="305.8" x2="577.4" y2="398" stroke="#e6e6e6" stroke-width="1.2"/><line x1="681.0" y1="305.8" x2="681.0" y2="398" stroke="#e6e6e6" stroke-width="1.2"/><line x1="784.5999999999999" y1="305.8" x2="784.5999999999999" y2="398" stroke="#e6e6e6" stroke-width="1.2"/><line x1="888.1999999999999" y1="305.8" x2="888.1999999999999" y2="398" stroke="#e6e6e6" stroke-width="1.2"/><line x1="991.8" y1="305.8" x2="991.8" y2="398" stroke="#e6e6e6" stroke-width="1.2"/><line x1="1095.4" y1="305.8" x2="1095.4" y2="398" stroke="#e6e6e6" stroke-width="1.2"/><line x1="1199.0" y1="305.8" x2="1199.0" y2="398" stroke="#e6e6e6" stroke-width="1.2"/><line x1="1302.6" y1="305.8" x2="1302.6" y2="398" stroke="#e6e6e6" stroke-width="1.2"/><path d="M493.0,319.7 L494.2,318.4 L495.5,315.7 L496.7,315.2 L498.0,312.3 L499.2,312.0 L500.5,309.4 L501.7,308.0 L502.9,307.5 L504.1,308.4 L505.3,306.9 L506.4,307.4 L507.6,305.8 L508.8,307.1 L510.0,306.3 L511.2,307.4 L512.3,306.1 L513.5,307.6 L514.7,306.8 L515.9,308.0 L517.0,306.6 L518.2,308.3 L519.4,307.1 L520.5,308.8 L521.7,308.3 L523.0,310.2 L524.3,310.7 L525.7,313.8 L527.0,314.3 L528.3,316.3 L529.4,317.5 L530.5,320.0 L531.6,319.9 L532.7,322.6 L533.9,322.3 L535.0,325.4 L536.1,325.1 L537.2,327.9 L538.3,328.8 L539.5,336.2 L540.7,341.4 L541.9,349.4 L543.1,354.1 L544.3,361.9 L545.5,367.8 L546.7,374.7 L547.9,376.7 L549.0,380.3 L550.2,381.1 L551.3,384.7 L552.5,385.9 L553.7,389.3 L554.8,390.5 L556.0,393.8 L557.1,395.0 L558.3,398.0 L559.4,398.0 L560.5,398.0 L561.6,398.0 L562.8,398.0 L563.9,398.0 L565.0,398.0 L566.1,398.0 L567.2,398.0 L568.3,398.0 L569.4,398.0 L570.5,398.0 L571.7,398.0 L572.8,398.0 L573.9,398.0 L575.0,398.0 L576.1,395.8 L577.2,391.4 L578.3,390.2 L579.5,385.7 L580.6,384.7 L581.7,380.0 L582.8,378.9 L583.9,375.0 L585.0,373.4 L586.1,368.7 L587.2,367.8 L588.4,363.3 L589.5,361.9 L590.6,358.0 L591.7,355.5 L592.9,354.7 L594.0,356.3 L595.2,355.3 L596.3,356.1 L597.5,355.0 L598.7,357.0 L599.8,355.8 L601.0,357.0 L602.1,355.7 L603.3,356.3 L604.4,354.7 L605.5,354.1 L606.6,351.5 L607.7,351.9 L608.9,349.5 L610.0,349.1 L611.1,346.9 L612.2,346.6 L613.3,344.0 L614.4,344.1 L615.5,340.9 L616.6,341.2 L617.8,338.2 L618.9,338.4 L620.0,336.4 L621.1,336.0 L622.2,333.8 L623.3,333.0 L624.4,330.8 L625.5,330.7 L626.7,328.4 L627.8,327.7 L628.9,325.2 L630.0,325.3 L631.1,322.5 L632.2,323.1 L633.3,320.4 L634.4,320.1 L635.6,317.6 L636.7,317.7 L637.8,314.9 L638.9,315.0 L640.0,313.0 L641.1,313.7 L642.2,312.0 L643.3,313.6 L644.5,312.5 L645.6,313.8 L646.7,312.6 L647.8,313.4 L648.9,312.0 L650.0,313.6 L651.1,312.4 L652.2,313.2 L653.4,312.5 L654.5,313.7 L655.6,312.8 L656.7,313.0 L657.9,313.6 L659.0,316.4 L660.2,316.8 L661.4,319.0 L662.5,319.1 L663.7,321.7 L664.9,321.9 L666.0,324.4 L667.2,324.2 L668.4,326.6 L669.5,327.4 L670.7,329.7 L671.9,329.4 L673.0,332.1 L674.2,333.0 L675.4,338.6 L676.5,342.5 L677.7,348.7 L678.8,352.8 L680.0,358.9 L681.2,363.0 L682.3,369.2 L683.5,373.2 L684.6,379.2 L685.8,383.8 L686.9,386.2 L688.0,386.7 L689.1,389.2 L690.2,389.3 L691.4,392.1 L692.5,392.9 L693.6,395.7 L694.7,396.0 L695.8,398.0 L696.9,398.0 L698.1,398.0 L699.2,398.0 L700.3,398.0 L701.4,398.0 L702.6,398.0 L703.7,398.0 L704.8,398.0 L706.0,398.0 L707.1,398.0 L708.2,398.0 L709.4,398.0 L710.5,398.0 L711.6,398.0 L712.7,398.0 L713.9,398.0 L715.0,398.0 L716.2,395.3 L717.3,391.3 L718.5,389.5 L719.7,385.4 L720.8,383.0 L722.0,379.0 L723.1,377.3 L724.3,372.8 L725.5,371.1 L726.6,366.8 L727.8,364.5 L729.0,360.3 L730.1,358.8 L731.3,354.8 L732.5,355.5 L733.6,354.7 L734.8,355.5 L735.9,354.7 L737.1,355.8 L738.2,354.8 L739.4,356.6 L740.5,355.5 L741.7,356.0 L742.8,354.2 L744.0,354.1 L745.1,351.2 L746.2,351.4 L747.3,348.7 L748.5,348.1 L749.6,346.0 L750.7,346.0 L751.9,343.3 L753.0,342.9 L754.1,340.5 L755.2,340.2 L756.4,337.8 L757.5,337.9 L758.6,335.3 L759.8,334.4 L760.9,331.9 L762.0,332.4 L763.1,329.2 L764.3,329.3 L765.4,326.5 L766.5,327.0 L767.7,324.3 L768.8,324.2 L769.9,321.1 L771.0,321.4 L772.2,318.7 L773.3,318.4 L774.4,316.1 L775.6,315.6 L776.7,313.6 L777.8,313.2 L778.9,310.7 L780.1,310.6 L781.2,308.4 L782.4,308.6 L783.5,307.4 L784.7,309.0 L785.8,307.3 L787.0,309.1 L788.1,307.2 L789.3,308.8 L790.5,307.8 L791.6,308.8 L792.8,307.6 L793.9,308.4 L795.1,307.1 L796.2,308.5 L797.4,307.3 L798.5,308.7 L799.7,307.7 L800.9,309.6 L802.0,309.7 L803.2,311.7 L804.3,311.7 L805.5,314.4 L806.7,314.2 L807.8,316.7 L809.0,317.1 L810.2,319.3 L811.3,319.0 L812.5,321.4 L813.6,321.5 L814.8,323.5 L816.0,327.7 L817.1,334.7 L818.3,338.1 L819.5,344.4 L820.6,348.6 L821.8,355.4 L823.0,359.4 L824.1,365.3 L825.3,370.0 L826.5,372.0 L827.6,372.6 L828.8,375.3 L829.9,375.8 L831.1,378.8 L832.3,379.4 L833.4,381.4 L834.6,382.5 L835.7,384.7 L836.9,386.0 L838.7,398.0 L839.8,398.0 L840.9,398.0 L842.0,398.0 L843.2,398.0 L844.3,398.0 L845.4,398.0 L846.5,398.0 L847.6,398.0 L848.7,398.0 L849.8,398.0 L851.0,398.0 L852.1,398.0 L853.2,398.0 L854.3,398.0 L855.5,395.0 L856.6,393.4 L857.8,388.8 L858.9,387.2 L860.1,383.6 L861.2,381.8 L862.4,378.2 L863.5,376.3 L864.7,372.4 L865.9,371.0 L867.0,367.1 L868.2,365.1 L869.3,361.5 L870.5,359.5 L871.6,355.8 L872.8,353.7 L874.0,353.0 L875.1,354.3 L876.3,353.6 L877.4,354.3 L878.6,353.5 L879.7,354.8 L880.9,353.3 L882.0,354.7 L883.2,353.4 L884.3,355.0 L885.5,354.4 L886.6,353.5 L887.7,350.9 L888.9,350.6 L890.0,347.7 L891.1,347.5 L892.2,344.8 L893.4,344.6 L894.5,342.2 L895.6,341.7 L896.7,338.8 L897.9,338.4 L899.0,336.1 L900.1,335.7 L901.2,332.8 L902.4,333.1 L903.5,330.2 L904.6,330.2 L905.7,326.9 L906.8,326.7 L908.0,324.2 L909.1,323.6 L910.2,321.0 L911.3,321.1 L912.5,318.0 L913.6,318.2 L914.7,315.2 L915.8,315.2 L917.0,312.3 L918.1,311.8 L919.2,310.0 L920.4,310.7 L921.5,309.8 L922.7,310.3 L923.9,309.2 L925.0,310.2 L926.2,309.7 L927.3,310.3 L928.5,309.1 L929.7,310.3 L930.8,309.8 L932.0,310.9 L933.1,309.7 L934.3,310.9 L935.5,309.3 L936.6,310.9 L937.8,310.0 L939.0,312.4 L940.1,312.3 L941.3,315.3 L942.4,315.7 L943.6,318.2 L944.8,318.3 L945.9,321.2 L947.1,321.6 L948.3,324.2 L949.4,323.9 L950.6,326.6 L951.7,327.4 L952.9,329.3 L954.0,334.2 L955.2,341.3 L956.3,345.5 L957.5,351.8 L958.6,356.6 L959.8,363.3 L960.9,367.3 L962.1,374.2 L963.2,379.2 L964.4,381.4 L965.5,382.1 L966.7,384.8 L967.9,385.5 L969.0,388.0 L970.2,388.9 L971.3,392.1 L972.5,392.3 L973.7,395.4 L974.8,396.0 L976.0,398.0 L977.2,398.0 L978.3,398.0 L979.5,398.0 L980.6,398.0 L981.8,398.0 L982.9,398.0 L984.1,398.0 L985.2,398.0 L986.4,398.0 L987.6,398.0 L988.7,398.0 L989.9,398.0 L991.0,398.0 L992.2,398.0 L993.3,398.0 L994.5,398.0 L995.6,394.5 L996.7,393.4 L997.8,389.2 L998.9,387.8 L1000.0,383.9 L1001.1,382.5 L1002.2,378.2 L1003.3,376.7 L1004.5,373.4 L1005.6,371.8 L1006.7,367.4 L1007.8,366.2 L1008.9,362.3 L1010.0,361.0 L1011.1,357.2 L1012.2,355.2 L1013.3,351.7 L1014.4,349.4 L1015.6,348.7 L1016.8,349.9 L1018.0,349.0 L1019.2,350.2 L1020.3,348.4 L1021.5,349.8 L1022.7,348.6 L1023.9,349.9 L1025.1,348.5 L1026.3,349.4 L1027.4,347.4 L1028.5,347.1 L1029.7,345.0 L1030.8,344.2 L1031.9,342.1 L1033.0,341.8 L1034.1,339.6 L1035.3,339.1 L1036.4,336.8 L1037.5,336.7 L1038.6,334.3 L1039.7,334.2 L1040.9,331.3 L1042.0,331.2 L1043.1,328.6 L1044.2,328.7 L1045.3,325.6 L1046.4,325.8 L1047.6,323.2 L1048.7,323.2 L1049.8,320.2 L1050.9,320.3 L1052.0,317.6 L1053.2,318.0 L1054.3,315.1 L1055.4,314.7 L1056.5,312.6 L1057.6,312.4 L1058.8,309.6 L1059.9,309.9 L1061.0,307.6 L1062.1,308.5 L1063.2,307.2 L1064.4,308.0 L1065.5,307.2 L1066.6,307.9 L1067.8,306.8 L1068.9,308.5 L1070.0,306.7 L1071.1,308.0 L1072.2,306.7 L1073.4,308.1 L1074.5,307.1 L1075.6,308.4 L1076.8,307.3 L1077.9,307.9 L1079.0,307.6 L1080.1,309.7 L1081.2,309.7 L1082.3,311.9 L1083.4,312.1 L1084.5,314.7 L1085.6,315.1 L1086.8,317.0 L1087.9,317.3 L1089.0,319.7 L1090.1,320.0 L1091.2,322.3 L1092.3,322.0 L1093.4,324.7 L1094.5,325.5 L1095.7,331.5 L1096.9,336.0 L1098.1,342.1 L1099.2,346.3 L1100.4,352.7 L1101.6,356.9 L1102.8,364.1 L1104.0,368.6 L1105.2,370.9 L1106.4,371.6 L1107.6,375.1 L1108.8,375.7 L1110.0,379.4 L1111.2,380.1 L1112.4,383.3 L1113.6,383.8 L1114.8,386.5 L1116.2,391.4 L1117.7,398.0 L1118.8,398.0 L1119.9,398.0 L1121.0,398.0 L1122.2,398.0 L1123.3,398.0 L1124.4,398.0 L1125.5,398.0 L1126.6,398.0 L1127.7,398.0 L1128.8,398.0 L1129.9,398.0 L1131.1,398.0 L1132.2,398.0 L1133.3,398.0 L1134.4,398.0 L1135.6,395.3 L1136.7,391.1 L1137.9,389.8 L1139.1,385.0 L1140.2,383.3 L1141.4,379.3 L1142.6,377.1 L1143.7,372.9 L1144.9,371.1 L1146.0,366.5 L1147.2,364.9 L1148.4,360.8 L1149.5,358.8 L1150.7,355.0 L1151.8,355.7 L1152.9,354.7 L1154.0,355.9 L1155.1,354.3 L1156.2,355.3 L1157.3,354.1 L1158.4,355.3 L1159.5,354.5 L1160.6,355.8 L1161.7,354.3 L1162.8,355.6 L1163.9,355.0 L1165.0,354.2 L1166.1,351.5 L1167.3,351.0 L1168.4,348.7 L1169.5,347.8 L1170.6,345.3 L1171.8,345.4 L1172.9,342.5 L1174.0,342.5 L1175.1,339.7 L1176.2,339.1 L1177.4,336.7 L1178.5,336.6 L1179.6,334.0 L1180.7,333.4 L1181.8,330.9 L1183.0,330.6 L1184.1,327.9 L1185.2,327.3 L1186.3,324.9 L1187.5,324.5 L1188.6,321.6 L1189.7,321.4 L1190.8,318.6 L1191.9,318.3 L1193.1,316.1 L1194.2,315.3 L1195.3,313.2 L1196.4,312.9 L1197.6,309.8 L1198.7,309.4 L1199.8,307.6 L1200.9,308.0 L1202.0,307.1 L1203.2,308.4 L1204.3,306.7 L1205.4,308.4 L1206.5,306.9 L1207.6,307.9 L1208.8,307.1 L1209.9,308.0 L1211.0,307.0 L1212.1,308.3 L1213.2,307.2 L1214.3,308.0 L1215.5,306.8 L1216.6,307.8 L1217.7,307.6 L1218.8,309.9 L1219.9,309.7 L1221.1,313.0 L1222.2,313.1 L1223.3,315.7 L1224.4,315.9 L1225.5,318.8 L1226.7,318.6 L1227.8,321.8 L1228.9,322.1 L1230.0,324.9 L1231.1,324.9 L1232.2,327.7 L1233.4,327.7 L1234.5,330.2 L1235.6,331.5 L1236.8,338.5 L1238.0,343.1 L1239.2,350.6 L1240.4,355.5 L1241.6,362.9 L1242.8,368.1 L1244.0,374.6 L1245.2,375.6 L1246.4,378.0 L1247.6,378.8 L1248.8,381.7 L1250.0,382.0 L1251.2,384.8 L1252.4,384.8 L1253.6,388.2 L1254.8,388.9 L1256.3,393.8 L1257.9,398.0 L1259.0,398.0 L1260.2,398.0 L1261.3,398.0 L1262.5,398.0 L1263.6,398.0 L1264.8,398.0 L1265.9,398.0 L1267.0,398.0 L1268.2,398.0 L1269.3,398.0 L1270.5,398.0 L1271.6,398.0 L1272.8,398.0 L1273.9,398.0 L1275.0,395.9 L1276.1,391.4 L1277.3,389.5 L1278.4,385.8 L1279.5,383.7 L1280.6,380.2 L1281.8,378.1 L1282.9,373.6 L1284.0,372.1 L1285.1,367.8 L1286.3,366.5 L1287.4,362.5 L1288.5,360.8 L1289.6,356.3 L1290.8,355.0 L1291.9,350.4 L1293.0,348.2 L1294.2,347.4 L1295.4,348.7 L1296.6,347.4 L1297.8,349.1 L1299.0,347.3 L1300.2,348.7 L1301.4,347.4 L1302.6,348.8 L1303.8,348.2 L1304.9,347.2 L1306.1,345.4 L1307.2,344.7 L1308.3,342.8 L1309.5,342.2 L1310.6,340.0 L1311.8,340.1 L1312.9,337.5 L1314.0,337.4 L1315.2,334.9 L1316.3,334.8 L1317.5,332.5 L1318.6,332.6 L1319.7,330.0 L1320.9,329.6 L1322.0,328.0" fill="none" stroke="#ff5519" stroke-width="1.15" stroke-linejoin="round"/><line x1="493.3" y1="305.8" x2="493.3" y2="398" stroke="#ff8a5c" stroke-width="1.6"/><line x1="486.5" y1="305.8" x2="494" y2="305.8" stroke="#ff8a5c" stroke-width="2"/><line x1="486.5" y1="332.1" x2="494" y2="332.1" stroke="#ff8a5c" stroke-width="2"/><line x1="486.5" y1="354.1" x2="494" y2="354.1" stroke="#ff8a5c" stroke-width="2"/><line x1="486.5" y1="376" x2="494" y2="376" stroke="#ff8a5c" stroke-width="2"/><line x1="486.5" y1="398" x2="494" y2="398" stroke="#ff8a5c" stroke-width="2"/><line x1="493" y1="437.5" x2="1322" y2="437.5" stroke="#e8e8e8" stroke-width="1.3"/><line x1="493" y1="529.5" x2="1322" y2="529.5" stroke="#e8e8e8" stroke-width="1.3"/><line x1="577.4" y1="437.5" x2="577.4" y2="529.5" stroke="#e6e6e6" stroke-width="1.2"/><line x1="681.0" y1="437.5" x2="681.0" y2="529.5" stroke="#e6e6e6" stroke-width="1.2"/><line x1="784.5999999999999" y1="437.5" x2="784.5999999999999" y2="529.5" stroke="#e6e6e6" stroke-width="1.2"/><line x1="888.1999999999999" y1="437.5" x2="888.1999999999999" y2="529.5" stroke="#e6e6e6" stroke-width="1.2"/><line x1="991.8" y1="437.5" x2="991.8" y2="529.5" stroke="#e6e6e6" stroke-width="1.2"/><line x1="1095.4" y1="437.5" x2="1095.4" y2="529.5" stroke="#e6e6e6" stroke-width="1.2"/><line x1="1199.0" y1="437.5" x2="1199.0" y2="529.5" stroke="#e6e6e6" stroke-width="1.2"/><line x1="1302.6" y1="437.5" x2="1302.6" y2="529.5" stroke="#e6e6e6" stroke-width="1.2"/><path d="M493,437.5 L557.8,437.5 L557.8,529.5 L575.8,529.5 L575.8,437.5 L698,437.5 L698,529.5 L715,529.5 L715,437.5 L838,437.5 L838,529.5 L855,529.5 L855,437.5 L977.5,437.5 L977.5,529.5 L995,529.5 L995,437.5 L1117.5,437.5 L1117.5,529.5 L1135,529.5 L1135,437.5 L1257,437.5 L1257,529.5 L1274.5,529.5 L1274.5,437.5 L1322,437.5" fill="none" stroke="#c2dcb6" stroke-width="1"/><line x1="493.3" y1="437.5" x2="493.3" y2="529.5" stroke="#80b96c" stroke-width="1.6"/><line x1="486.5" y1="437.5" x2="494" y2="437.5" stroke="#80b96c" stroke-width="2"/><line x1="486.5" y1="529.5" x2="494" y2="529.5" stroke="#80b96c" stroke-width="2"/><line x1="493" y1="569.6" x2="1322" y2="569.6" stroke="#e8e8e8" stroke-width="1.3"/><line x1="493" y1="583.2" x2="1322" y2="583.2" stroke="#e8e8e8" stroke-width="1.3"/><line x1="493" y1="602.5" x2="1322" y2="602.5" stroke="#e8e8e8" stroke-width="1.3"/><line x1="493" y1="621.3" x2="1322" y2="621.3" stroke="#e8e8e8" stroke-width="1.3"/><line x1="493" y1="640.8" x2="1322" y2="640.8" stroke="#e8e8e8" stroke-width="1.3"/><line x1="577.4" y1="569.6" x2="577.4" y2="660" stroke="#e6e6e6" stroke-width="1.2"/><line x1="681.0" y1="569.6" x2="681.0" y2="660" stroke="#e6e6e6" stroke-width="1.2"/><line x1="784.5999999999999" y1="569.6" x2="784.5999999999999" y2="660" stroke="#e6e6e6" stroke-width="1.2"/><line x1="888.1999999999999" y1="569.6" x2="888.1999999999999" y2="660" stroke="#e6e6e6" stroke-width="1.2"/><line x1="991.8" y1="569.6" x2="991.8" y2="660" stroke="#e6e6e6" stroke-width="1.2"/><line x1="1095.4" y1="569.6" x2="1095.4" y2="660" stroke="#e6e6e6" stroke-width="1.2"/><line x1="1199.0" y1="569.6" x2="1199.0" y2="660" stroke="#e6e6e6" stroke-width="1.2"/><line x1="1302.6" y1="569.6" x2="1302.6" y2="660" stroke="#e6e6e6" stroke-width="1.2"/><rect x="493" y="659" width="829" height="3.6" fill="#efefef"/><path d="M493.0,619.7 L495.4,618.4 L497.8,615.8 L499.8,617.8 L501.7,618.8 L503.7,615.0 L505.6,609.0 L507.6,605.3 L509.5,599.4 L511.5,597.0 L513.5,589.6 L515.4,587.5 L517.4,581.6 L519.3,581.8 L521.1,579.8 L523.0,581.1 L524.8,579.6 L526.7,580.2 L528.6,578.7 L530.4,580.5 L532.3,577.2 L534.2,579.6 L536.0,576.5 L537.9,578.0 L539.7,576.4 L541.6,577.8 L543.5,575.1 L545.3,577.4 L547.2,574.1 L549.1,575.6 L550.9,573.7 L552.8,575.6 L554.6,573.1 L556.5,573.7 L558.1,660.5 L560.0,660.5 L561.9,660.5 L563.8,660.5 L565.7,660.5 L567.6,660.5 L569.5,660.5 L571.4,660.5 L573.3,660.5 L575.2,660.5 L577.1,660.5 L579.0,658.8 L580.9,655.1 L582.8,654.3 L584.7,650.1 L586.6,650.8 L588.5,646.1 L590.4,645.6 L592.3,641.2 L594.2,641.5 L596.1,636.8 L598.0,637.4 L599.9,632.8 L601.8,632.4 L603.7,628.3 L605.6,628.0 L607.5,624.4 L609.4,622.7 L611.2,621.7 L613.1,623.4 L614.9,621.3 L616.8,621.8 L618.6,619.9 L620.5,621.4 L622.3,619.4 L624.2,621.0 L626.0,619.0 L627.8,621.0 L629.7,618.5 L631.5,619.6 L633.4,617.9 L635.2,619.2 L637.1,617.1 L638.9,618.2 L640.8,615.9 L642.6,616.8 L644.4,613.4 L646.2,612.5 L648.0,607.2 L649.8,606.5 L651.6,602.9 L653.4,601.3 L655.2,596.7 L657.0,596.4 L658.8,592.0 L660.6,590.6 L662.4,586.6 L664.2,584.5 L666.0,583.2 L667.9,584.0 L669.7,582.0 L671.6,584.2 L673.4,580.8 L675.3,583.2 L677.1,579.9 L679.0,581.4 L680.8,579.9 L682.6,581.7 L684.5,578.4 L686.3,580.1 L688.2,577.3 L690.0,579.5 L691.9,576.6 L693.7,578.3 L695.6,576.6 L697.4,576.7 L698.4,660.5 L700.2,660.5 L702.1,660.5 L703.9,660.5 L705.8,660.5 L707.6,660.5 L709.5,660.5 L711.3,660.5 L713.2,660.5 L715.0,660.5 L716.8,657.3 L718.6,656.5 L720.4,652.9 L722.2,653.0 L724.1,648.4 L725.9,647.2 L727.7,644.2 L729.5,642.9 L731.3,638.7 L733.1,638.6 L734.9,634.8 L736.7,633.7 L738.5,629.4 L740.4,629.6 L742.2,625.8 L744.0,624.5 L745.8,621.5 L747.6,619.6 L749.4,618.9 L751.3,620.4 L753.1,618.6 L754.9,619.3 L756.8,617.8 L758.6,619.2 L760.4,616.8 L762.3,618.7 L764.1,617.0 L765.9,619.2 L767.7,616.8 L769.6,619.1 L771.4,616.4 L773.2,617.8 L775.1,616.1 L776.9,617.2 L778.7,615.8 L780.6,617.1 L782.4,616.3 L784.2,613.9 L786.0,607.2 L787.8,605.7 L789.6,600.5 L791.5,597.7 L793.3,592.5 L795.1,589.9 L796.9,584.8 L798.7,581.6 L800.6,579.8 L802.4,581.3 L804.2,580.1 L806.1,581.6 L808.0,578.7 L809.8,580.9 L811.7,578.1 L813.5,580.0 L815.4,577.0 L817.2,579.1 L819.1,576.1 L820.9,578.0 L822.8,576.2 L824.6,576.9 L826.5,574.5 L828.3,577.0 L830.2,573.6 L832.0,575.5 L833.9,573.2 L835.7,574.0 L837.8,660.5 L839.6,660.5 L841.4,660.5 L843.2,660.5 L845.0,660.5 L846.9,660.5 L848.7,660.5 L850.5,660.5 L852.3,660.5 L854.1,660.5 L855.9,657.1 L857.8,657.6 L859.6,653.0 L861.4,653.3 L863.3,649.2 L865.1,649.5 L866.9,645.6 L868.8,645.7 L870.6,640.6 L872.4,640.5 L874.2,636.5 L876.1,637.6 L877.9,632.8 L879.7,632.4 L881.6,628.5 L883.4,628.4 L885.2,624.3 L887.1,625.0 L888.9,621.8 L890.7,621.8 L892.5,620.5 L894.3,621.8 L896.2,619.3 L898.0,621.3 L899.8,618.1 L901.6,619.9 L903.4,618.6 L905.2,620.0 L907.0,617.8 L908.9,619.3 L910.7,617.0 L912.5,618.5 L914.3,615.4 L916.1,617.8 L917.9,615.0 L919.7,617.1 L921.6,614.7 L923.4,616.1 L925.2,613.8 L927.0,614.2 L928.8,609.3 L930.7,608.6 L932.5,602.8 L934.4,601.3 L936.2,596.4 L938.0,593.7 L939.9,588.8 L941.7,587.3 L943.6,581.5 L945.4,579.4 L947.3,577.9 L949.1,579.0 L951.0,577.3 L952.8,578.9 L954.7,576.2 L956.6,577.1 L958.4,574.9 L960.3,577.2 L962.1,574.9 L964.0,575.9 L965.8,573.7 L967.7,575.4 L969.6,572.9 L971.4,573.8 L973.3,571.8 L975.1,573.8 L977.0,571.8 L977.5,660.5 L979.5,660.5 L981.5,660.5 L983.5,660.5 L985.5,660.5 L987.4,660.5 L989.4,660.5 L991.4,660.5 L993.4,660.5 L995.4,660.5 L997.2,658.6 L999.1,655.3 L1000.9,654.6 L1002.8,649.6 L1004.6,649.7 L1006.4,645.5 L1008.3,645.5 L1010.1,640.4 L1011.9,639.8 L1013.8,635.6 L1015.6,635.2 L1017.4,631.6 L1019.3,631.3 L1021.1,626.7 L1023.0,626.6 L1024.8,622.9 L1026.7,623.2 L1028.5,621.0 L1030.4,622.7 L1032.3,621.4 L1034.1,622.6 L1036.0,620.6 L1037.9,622.2 L1039.7,619.4 L1041.6,621.9 L1043.5,620.1 L1045.3,620.9 L1047.2,618.9 L1049.1,620.6 L1051.0,618.2 L1052.8,620.1 L1054.7,618.5 L1056.6,619.3 L1058.4,617.0 L1060.3,618.9 L1062.2,616.6 L1064.0,619.2 L1065.9,617.4 L1067.7,614.9 L1069.6,609.1 L1071.4,607.8 L1073.3,602.4 L1075.1,601.0 L1076.9,595.0 L1078.8,593.8 L1080.6,588.0 L1082.5,586.6 L1084.3,581.6 L1086.1,582.6 L1087.9,579.8 L1089.8,581.5 L1091.6,579.7 L1093.4,581.2 L1095.2,578.8 L1097.0,580.4 L1098.8,578.4 L1100.7,579.0 L1102.5,577.7 L1104.3,579.2 L1106.1,577.0 L1107.9,578.7 L1109.7,576.1 L1111.5,577.6 L1113.4,575.4 L1115.2,577.0 L1117.0,575.5 L1117.5,660.5 L1119.4,660.5 L1121.2,660.5 L1123.1,660.5 L1125.0,660.5 L1126.8,660.5 L1128.7,660.5 L1130.6,660.5 L1132.4,660.5 L1134.3,660.5 L1136.1,659.4 L1137.9,656.5 L1139.7,657.3 L1141.5,653.7 L1143.4,653.8 L1145.2,650.4 L1147.0,650.2 L1148.8,647.6 L1150.6,646.7 L1152.4,643.3 L1154.2,644.6 L1156.0,640.4 L1157.9,641.5 L1159.7,637.0 L1161.5,637.5 L1163.3,634.4 L1165.1,634.8 L1166.9,631.2 L1168.7,632.3 L1170.5,627.9 L1172.4,629.2 L1174.2,625.6 L1176.0,625.6 L1177.8,622.9 L1179.7,623.9 L1181.6,621.2 L1183.4,623.4 L1185.3,620.7 L1187.2,622.6 L1189.1,620.2 L1191.0,622.3 L1192.9,620.2 L1194.7,622.6 L1196.6,619.7 L1198.5,620.7 L1200.5,616.6 L1202.4,614.6 L1204.3,609.9 L1206.3,608.3 L1208.2,602.3 L1210.2,602.0 L1212.2,596.3 L1214.1,594.6 L1216.0,589.0 L1218.0,587.0 L1219.8,586.1 L1221.6,587.3 L1223.4,585.9 L1225.3,586.5 L1227.1,584.7 L1228.9,586.7 L1230.7,584.1 L1232.5,585.7 L1234.3,583.1 L1236.1,585.5 L1238.0,583.7 L1239.8,584.3 L1241.6,582.1 L1243.4,585.0 L1245.2,581.6 L1247.0,584.0 L1248.8,581.9 L1250.7,582.8 L1252.5,581.5 L1254.3,582.5 L1256.1,581.6 L1256.6,660.5 L1258.4,660.5 L1260.2,660.5 L1262.0,660.5 L1263.8,660.5 L1265.6,660.5 L1267.4,660.5 L1269.2,660.5 L1271.0,660.5 L1272.8,660.5 L1274.6,660.5 L1276.5,656.7 L1278.3,657.3 L1280.2,652.2 L1282.0,651.6 L1283.9,648.2 L1285.7,647.2 L1287.6,642.6 L1289.4,642.3 L1291.3,638.1 L1293.1,638.3 L1295.0,633.7 L1296.8,634.0 L1298.7,629.4 L1300.5,628.7 L1302.4,624.9 L1304.2,623.5 L1306.1,620.7 L1308.1,620.6 L1310.1,619.1 L1312.1,619.9 L1314.0,618.7 L1316.0,620.2 L1318.0,617.5 L1320.0,619.3 L1322.0,617.4" fill="none" stroke="#ffb3ff" stroke-width="1"/><line x1="493.3" y1="569.6" x2="493.3" y2="661" stroke="#ff44ff" stroke-width="1.6"/><line x1="486.5" y1="569.6" x2="494" y2="569.6" stroke="#ff44ff" stroke-width="2"/><line x1="486.5" y1="583.2" x2="494" y2="583.2" stroke="#ff44ff" stroke-width="2"/><line x1="486.5" y1="602.5" x2="494" y2="602.5" stroke="#ff44ff" stroke-width="2"/><line x1="486.5" y1="621.3" x2="494" y2="621.3" stroke="#ff44ff" stroke-width="2"/><line x1="486.5" y1="640.8" x2="494" y2="640.8" stroke="#ff44ff" stroke-width="2"/><line x1="486.5" y1="660.5" x2="494" y2="660.5" stroke="#ff44ff" stroke-width="2"/><line x1="493" y1="665.9" x2="1322" y2="665.9" stroke="#6b6b6b" stroke-width="1.6"/><line x1="493.5" y1="666" x2="493.5" y2="669.5" stroke="#444" stroke-width="1.3"/><line x1="577.4" y1="666" x2="577.4" y2="669.5" stroke="#444" stroke-width="1.3"/><line x1="681.0" y1="666" x2="681.0" y2="669.5" stroke="#444" stroke-width="1.3"/><line x1="784.5999999999999" y1="666" x2="784.5999999999999" y2="669.5" stroke="#444" stroke-width="1.3"/><line x1="888.1999999999999" y1="666" x2="888.1999999999999" y2="669.5" stroke="#444" stroke-width="1.3"/><line x1="991.8" y1="666" x2="991.8" y2="669.5" stroke="#444" stroke-width="1.3"/><line x1="1095.4" y1="666" x2="1095.4" y2="669.5" stroke="#444" stroke-width="1.3"/><line x1="1199.0" y1="666" x2="1199.0" y2="669.5" stroke="#444" stroke-width="1.3"/><line x1="1302.6" y1="666" x2="1302.6" y2="669.5" stroke="#444" stroke-width="1.3"/><line x1="1321.5" y1="666" x2="1321.5" y2="669.5" stroke="#444" stroke-width="1.3"/></svg>
<div class="t" style="left:83.5px;width:400px;text-align:right;top:168.48px;font-size:10.3px;line-height:10.3px;color:#333;font-weight:400;">52</div>
<div class="t" style="left:83.5px;width:400px;text-align:right;top:172.08px;font-size:10.3px;line-height:10.3px;color:#bbb;font-weight:400;">50</div>
<div class="t" style="left:83.5px;width:400px;text-align:right;top:190.48px;font-size:10.3px;line-height:10.3px;color:#333;font-weight:400;">40</div>
<div class="t" style="left:83.5px;width:400px;text-align:right;top:208.18px;font-size:10.3px;line-height:10.3px;color:#333;font-weight:400;">30</div>
<div class="t" style="left:83.5px;width:400px;text-align:right;top:225.88px;font-size:10.3px;line-height:10.3px;color:#333;font-weight:400;">20</div>
<div class="t" style="left:83.5px;width:400px;text-align:right;top:243.58px;font-size:10.3px;line-height:10.3px;color:#333;font-weight:400;">10</div>
<div class="t" style="left:83.5px;width:400px;text-align:right;top:261.28px;font-size:10.3px;line-height:10.3px;color:#333;font-weight:400;">0</div>
<div class="t" style="left:83.5px;width:400px;text-align:right;top:300.68px;font-size:10.3px;line-height:10.3px;color:#333;font-weight:400;">42</div>
<div class="t" style="left:83.5px;width:400px;text-align:right;top:305.18px;font-size:10.3px;line-height:10.3px;color:#bbb;font-weight:400;">40</div>
<div class="t" style="left:83.5px;width:400px;text-align:right;top:327.58px;font-size:10.3px;line-height:10.3px;color:#333;font-weight:400;">30</div>
<div class="t" style="left:83.5px;width:400px;text-align:right;top:349.58px;font-size:10.3px;line-height:10.3px;color:#333;font-weight:400;">20</div>
<div class="t" style="left:83.5px;width:400px;text-align:right;top:371.48px;font-size:10.3px;line-height:10.3px;color:#333;font-weight:400;">10</div>
<div class="t" style="left:83.5px;width:400px;text-align:right;top:393.48px;font-size:10.3px;line-height:10.3px;color:#333;font-weight:400;">0</div>
<div class="t" style="left:83.5px;width:400px;text-align:right;top:433.57px;font-size:9.6px;line-height:9.6px;color:#333;font-weight:400;">ACTIVE</div>
<div class="t" style="left:83.5px;width:400px;text-align:right;top:525.57px;font-size:9.6px;line-height:9.6px;color:#333;font-weight:400;">INACTIVE</div>
<div class="t" style="left:83.5px;width:400px;text-align:right;top:565.08px;font-size:10.3px;line-height:10.3px;color:#333;font-weight:400;">47</div>
<div class="t" style="left:83.5px;width:400px;text-align:right;top:578.68px;font-size:10.3px;line-height:10.3px;color:#333;font-weight:400;">40</div>
<div class="t" style="left:83.5px;width:400px;text-align:right;top:597.98px;font-size:10.3px;line-height:10.3px;color:#333;font-weight:400;">30</div>
<div class="t" style="left:83.5px;width:400px;text-align:right;top:616.78px;font-size:10.3px;line-height:10.3px;color:#333;font-weight:400;">20</div>
<div class="t" style="left:83.5px;width:400px;text-align:right;top:636.28px;font-size:10.3px;line-height:10.3px;color:#333;font-weight:400;">10</div>
<div class="t" style="left:83.5px;width:400px;text-align:right;top:655.78px;font-size:10.3px;line-height:10.3px;color:#333;font-weight:400;">.0</div>
<div class="t" style="left:377.4px;width:400px;text-align:center;top:670.98px;font-size:10.3px;line-height:10.3px;color:#333;font-weight:400;">03 AM</div>
<div class="t" style="left:481.0px;width:400px;text-align:center;top:670.98px;font-size:10.3px;line-height:10.3px;color:#333;font-weight:400;">04 AM</div>
<div class="t" style="left:584.5999999999999px;width:400px;text-align:center;top:670.98px;font-size:10.3px;line-height:10.3px;color:#333;font-weight:400;">05 AM</div>
<div class="t" style="left:688.1999999999999px;width:400px;text-align:center;top:670.98px;font-size:10.3px;line-height:10.3px;color:#333;font-weight:400;">06 AM</div>
<div class="t" style="left:791.8px;width:400px;text-align:center;top:670.98px;font-size:10.3px;line-height:10.3px;color:#333;font-weight:400;">07 AM</div>
<div class="t" style="left:895.4000000000001px;width:400px;text-align:center;top:670.98px;font-size:10.3px;line-height:10.3px;color:#333;font-weight:400;">08 AM</div>
<div class="t" style="left:999.0px;width:400px;text-align:center;top:670.98px;font-size:10.3px;line-height:10.3px;color:#333;font-weight:400;">09 AM</div>
<div class="t" style="left:1102.6px;width:400px;text-align:center;top:670.98px;font-size:10.3px;line-height:10.3px;color:#333;font-weight:400;">10 AM</div>
<div class="a" style="left:493.3px;top:690.3px;width:31.30000000000001px;height:31.100000000000023px;background:#fff;border:1px solid #dedede;border-radius:4px;box-sizing:border-box;"></div>
<svg class="a" style="left:505px;top:701px;" width="8" height="10" viewBox="0 0 8 10"><polygon points="6.5,1.5 6.5,8.5 2,5" fill="#333"/></svg>
<div class="a" style="left:529.3px;top:690.3px;width:32.30000000000007px;height:31.100000000000023px;background:#fff;border:1px solid #dedede;border-radius:4px;box-sizing:border-box;"></div>
<svg class="a" style="left:536px;top:696px;" width="20" height="20" viewBox="0 0 20 20"><rect x="3" y="4" width="14" height="13" rx="1.3" fill="none" stroke="#777" stroke-width="1.3"/><line x1="3" y1="7.5" x2="17" y2="7.5" stroke="#777" stroke-width="1.2"/><line x1="6.5" y1="2" x2="6.5" y2="5" stroke="#777" stroke-width="1.3"/><line x1="13.5" y1="2" x2="13.5" y2="5" stroke="#777" stroke-width="1.3"/><rect x="11.5" y="11.5" width="3.5" height="3.5" fill="#777"/></svg>
<div class="a" style="left:566.3px;top:690.3px;width:32.30000000000007px;height:31.100000000000023px;background:#fff;border:1px solid #dedede;border-radius:4px;box-sizing:border-box;border-color:#cfd8e3;"></div>
<svg class="a" style="left:572px;top:696px;" width="20" height="20" viewBox="0 0 20 20"><circle cx="10.3" cy="10.3" r="6.6" fill="none" stroke="#777" stroke-width="1.2"/><polyline points="10.5,6.2 10.5,10.6 14,10.6" fill="none" stroke="#777" stroke-width="1.3"/></svg>
<div class="a" style="left:820.3px;top:690.5px;width:31.300000000000068px;height:31.0px;background:#fff;border:1px solid #dedede;border-radius:4px;box-sizing:border-box;"></div>
<svg class="a" style="left:826px;top:696px;" width="20" height="20" viewBox="0 0 20 20"><polyline points="2.5,2 2.5,17.5 18.5,17.5" fill="none" stroke="#555" stroke-width="1.3"/><path d="M3,10 Q6,6 10,6 Q14,6 15.5,3" fill="none" stroke="#555" stroke-width="1.3"/><line x1="3" y1="11.5" x2="15" y2="11.5" stroke="#555" stroke-width="1.1"/><path d="M3,17 L8,14 L10,14.5 L15,12" fill="none" stroke="#555" stroke-width="1.1"/></svg>
<div class="a" style="left:856.4px;top:690.5px;width:102.10000000000002px;height:31.0px;background:#fff;border:1px solid #dedede;border-radius:4px;box-sizing:border-box;"></div>
<div class="a" style="left:927.8px;top:691px;width:1px;height:30px;background:#dedede;"></div>
<div class="t" style="left:869.2px;top:699.80px;font-size:13.7px;line-height:13.7px;color:#2b2b2b;font-weight:400;">8 hours</div>
<svg class="a" style="left:934px;top:696px;" width="17" height="20" viewBox="0 0 17 20"><rect x="3" y="8.5" width="11" height="9.5" rx="1.5" fill="none" stroke="#444" stroke-width="1.5"/><path d="M5.5,8.5 V5.5 Q5.5,2 8.5,2 Q11.5,2 11.5,5" fill="none" stroke="#444" stroke-width="1.5"/><circle cx="8.5" cy="13" r="1.3" fill="#444"/></svg>
<div class="a" style="left:963.6px;top:690.5px;width:31.0px;height:31.0px;background:#fff;border:1px solid #dedede;border-radius:4px;box-sizing:border-box;border-color:#efefef;"></div>
<svg class="a" style="left:969px;top:696px;" width="20" height="20" viewBox="0 0 20 20"><path d="M5,7 A6.5,6.5 0 1 1 4,12" fill="none" stroke="#d0d0d0" stroke-width="1.4"/><polygon points="2.5,6.5 7,6.5 4.5,10" fill="#d0d0d0"/><polyline points="10.5,6.5 10.5,10.5 13.5,12" fill="none" stroke="#d0d0d0" stroke-width="1.3"/></svg>
<div class="a" style="left:1221.3px;top:690.4px;width:32.40000000000009px;height:31.300000000000068px;background:#fff;border:1px solid #dedede;border-radius:4px;box-sizing:border-box;"></div>
<svg class="a" style="left:1228px;top:696px;" width="20" height="20" viewBox="0 0 20 20"><rect x="3" y="4" width="14" height="13" rx="1.3" fill="none" stroke="#777" stroke-width="1.3"/><line x1="3" y1="7.5" x2="17" y2="7.5" stroke="#777" stroke-width="1.2"/><line x1="6.5" y1="2" x2="6.5" y2="5" stroke="#777" stroke-width="1.3"/><line x1="13.5" y1="2" x2="13.5" y2="5" stroke="#777" stroke-width="1.3"/><rect x="11.5" y="11.5" width="3.5" height="3.5" fill="#777"/></svg>
<div class="a" style="left:1258.3px;top:690.4px;width:32.299999999999955px;height:31.300000000000068px;background:#fff;border:1px solid #dedede;border-radius:4px;box-sizing:border-box;border-color:#cfd8e3;"></div>
<svg class="a" style="left:1264.5px;top:696px;" width="20" height="20" viewBox="0 0 20 20"><circle cx="10.3" cy="10.3" r="6.6" fill="none" stroke="#777" stroke-width="1.2"/><polyline points="10.5,6.2 10.5,10.6 14,10.6" fill="none" stroke="#777" stroke-width="1.3"/></svg>
<div class="a" style="left:1290.6px;top:690.4px;width:31.300000000000182px;height:31.300000000000068px;background:#fff;border:1px solid #dedede;border-radius:4px;box-sizing:border-box;"></div>
<svg class="a" style="left:1302px;top:701px;" width="8" height="10" viewBox="0 0 8 10"><polygon points="1.5,1.5 1.5,8.5 6,5" fill="#333"/></svg>
<svg class="a" style="left:0px;top:0px;pointer-events:none;" width="1380" height="900" viewBox="0 0 1380 900"><line x1="493" y1="731.2" x2="1320" y2="731.2" stroke="#74a85c" stroke-width="2"/><line x1="493" y1="759.3" x2="1320" y2="759.3" stroke="#8dbb7a" stroke-width="1.2"/><path d="M495.0,731 L495.0,759 M520.1,731 L520.1,759 M541.4,731 L541.4,759 M573.8,731 L573.8,759 M593.4,731 L593.4,759 M623.1,731 L623.1,759 M649.2,731 L649.2,759 M668.5,731 L668.5,759 M697.6,731 L697.6,759 M716.5,731 L716.5,759 M744.0,731 L744.0,759 M763.5,731 L763.5,759 M783.5,731 L783.5,759 M810.9,731 L810.9,759 M847.1,731 L847.1,759 M867.8,731 L867.8,759 M890.7,731 L890.7,759 M922.5,731 L922.5,759 M961.3,731 L961.3,759 M992.0,731 L992.0,759 M1018.8,731 L1018.8,759 M1058.2,731 L1058.2,759 M1077.3,731 L1077.3,759 M1114.2,731 L1114.2,759 M1138.5,731 L1138.5,759 M1159.7,731 L1159.7,759 M1180.3,731 L1180.3,759 M1205.1,731 L1205.1,759 M1241.0,731 L1241.0,759 M1263.0,731 L1263.0,759 M1293.8,731 L1293.8,759 " fill="none" stroke="#8dbb7a" stroke-width="1"/><path d="M493.5,732.1 L495.1,758.1 L496.7,732.0 L498.1,756.4 L499.4,733.3 L500.7,757.6 L502.0,732.2 L503.4,758.5 L505.0,731.5 L506.3,756.4 L508.0,733.5 L509.6,758.5 L511.2,733.9 L512.9,756.8 L514.5,732.7 L516.2,757.7 L517.6,732.4 L519.0,756.9 L520.3,733.5 L521.9,759.0 L523.5,732.9 L525.1,756.4 L526.7,732.6 L528.0,756.6 L529.5,732.1 L530.9,757.8 L532.4,731.8 L533.8,756.7 L535.2,732.0 L536.6,756.2 L538.1,733.9 L539.5,758.2 L541.2,731.6 L542.5,758.4 L544.2,733.1 L545.5,757.2 L547.1,733.7 L548.8,756.6 L550.5,732.4 L552.1,756.4 L553.8,733.0 L555.4,756.6 L556.9,733.0 L558.4,757.1 L560.0,732.4 L561.4,756.5 L563.0,731.8 L564.3,756.2 L565.9,732.9 L567.4,756.1 L568.8,732.4 L570.1,756.0 L571.8,731.8 L573.2,756.8 L574.7,731.7 L576.2,757.1 L577.8,731.5 L579.2,757.5 L580.9,732.8 L582.4,758.0 L583.8,731.6 L585.2,758.7 L586.8,732.1 L588.4,758.5 L589.8,733.0 L591.2,756.7 L592.5,732.0 L593.9,756.1 L595.3,731.7 L596.9,757.8 L598.1,733.4 L599.4,757.4 L601.0,732.3 L602.3,757.3 L603.6,733.7 L604.8,758.5 L606.2,732.3 L607.6,756.1 L608.9,732.4 L610.3,758.6 L612.0,731.6 L613.5,756.4 L615.2,732.3 L616.9,757.6 L618.1,731.5 L619.5,758.6 L620.8,732.7 L622.2,757.0 L623.8,732.0 L625.4,758.0 L627.1,732.8 L628.8,757.3 L630.3,733.1 L632.0,758.7 L633.3,731.8 L634.8,758.4 L636.2,732.2 L638.0,756.9 L639.2,731.6 L640.4,758.2 L641.7,733.3 L643.4,759.0 L645.0,732.6 L646.6,758.5 L648.2,732.2 L649.8,756.3 L651.1,734.0 L652.6,756.8 L654.2,732.6 L655.4,756.1 L656.8,732.3 L658.5,756.7 L660.2,733.6 L661.6,759.0 L663.2,732.7 L664.6,757.4 L666.2,732.8 L667.6,757.1 L669.0,732.0 L670.5,756.1 L672.2,731.9 L673.4,757.8 L674.8,733.7 L676.3,757.6 L677.9,732.0 L679.6,757.9 L681.0,733.9 L682.2,758.6 L683.5,733.6 L684.8,756.2 L686.2,733.8 L687.6,757.5 L689.1,732.1 L690.6,756.0 L692.1,733.4 L693.4,756.7 L694.7,733.3 L696.1,758.7 L697.7,731.8 L699.4,758.8 L701.1,733.6 L702.6,758.2 L704.2,733.0 L705.5,756.4 L707.1,733.0 L708.4,757.9 L709.9,732.8 L711.5,758.6 L712.9,733.5 L714.4,757.7 L715.8,733.8 L717.3,758.9 L718.7,733.2 L720.4,758.1 L721.8,731.7 L723.3,757.2 L724.9,733.5 L726.6,757.3 L728.1,732.9 L729.7,756.2 L731.0,731.9 L732.4,756.9 L734.1,732.0 L735.8,756.9 L737.1,733.9 L738.4,756.3 L739.7,731.7 L741.1,756.6 L742.4,731.5 L743.9,756.1 L745.3,732.9 L747.0,758.0 L748.5,733.3 L750.2,758.6 L751.5,731.6 L753.0,757.6 L754.5,733.5 L755.8,758.1 L757.2,732.6 L758.6,756.8 L760.1,732.9 L761.8,756.8 L763.4,731.7 L764.9,756.5 L766.6,733.9 L767.9,758.4 L769.3,732.3 L770.5,757.3 L771.8,733.3 L773.3,757.3 L774.9,732.1 L776.3,757.1 L777.5,733.7 L778.7,756.3 L780.4,733.5 L781.8,757.3 L783.1,731.5 L784.6,756.7 L785.8,733.8 L787.1,757.1 L788.7,733.4 L789.9,758.2 L791.4,733.1 L793.2,758.4 L794.7,733.4 L796.2,757.7 L797.8,733.0 L799.2,756.1 L800.8,732.4 L802.3,756.9 L803.8,732.5 L805.4,757.8 L807.0,733.5 L808.4,757.6 L810.0,733.3 L811.6,758.7 L813.1,732.9 L814.4,756.7 L815.9,732.7 L817.6,756.1 L819.0,733.4 L820.4,758.5 L821.7,733.4 L823.1,757.7 L824.4,732.5 L826.0,758.2 L827.5,732.6 L828.7,758.1 L830.2,733.3 L831.7,757.2 L833.4,731.8 L835.1,756.3 L836.9,733.0 L838.3,758.8 L839.8,732.8 L841.0,758.4 L842.6,732.1 L843.8,757.3 L845.5,733.7 L847.0,756.1 L848.7,732.0 L850.3,757.5 L852.0,731.9 L853.6,758.2 L854.8,732.9 L856.2,758.1 L857.9,733.2 L859.4,757.8 L860.7,732.7 L862.0,758.2 L863.2,732.8 L864.5,757.7 L865.8,731.6 L867.3,758.2 L869.0,733.2 L870.7,756.4 L872.3,733.1 L873.6,756.4 L874.9,732.8 L876.6,758.1 L878.1,731.7 L879.7,757.5 L881.0,733.0 L882.3,756.9 L883.7,733.4 L885.0,757.3 L886.3,733.2 L888.0,756.8 L889.6,732.7 L890.9,756.8 L892.4,733.5 L893.9,756.0 L895.6,733.0 L897.0,756.7 L898.4,733.2 L899.8,756.4 L901.5,732.6 L902.7,758.7 L904.0,732.4 L905.5,758.0 L907.2,731.9 L908.7,758.6 L910.2,733.3 L911.6,758.1 L913.3,732.3 L915.0,757.0 L916.6,733.4 L918.3,758.6 L919.8,733.9 L921.1,757.7 L922.4,733.0 L923.9,756.9 L925.6,732.5 L926.9,756.6 L928.4,732.5 L929.6,756.9 L931.4,732.7 L933.0,757.3 L934.2,733.0 L935.5,756.4 L937.1,733.2 L938.3,758.8 L939.5,731.9 L940.8,758.4 L942.5,733.4 L943.9,758.7 L945.2,733.9 L946.4,756.5 L948.0,733.4 L949.6,756.7 L951.3,732.8 L952.6,756.3 L954.3,731.6 L955.6,757.1 L957.3,733.6 L959.0,757.9 L960.2,733.3 L961.5,758.8 L963.2,731.7 L964.8,756.7 L966.1,733.7 L967.5,756.9 L969.0,731.7 L970.5,757.9 L972.2,731.8 L973.8,756.3 L975.2,732.3 L976.4,756.3 L978.0,732.5 L979.3,757.5 L980.6,733.2 L982.3,757.4 L983.7,732.5 L985.1,757.2 L986.4,732.2 L988.0,757.4 L989.3,731.9 L990.9,757.1 L992.6,733.0 L994.1,757.1 L995.6,732.5 L997.1,758.8 L998.4,732.0 L1000.1,758.8 L1001.7,733.7 L1003.0,758.2 L1004.3,733.6 L1005.7,757.5 L1007.2,732.0 L1008.7,758.6 L1010.1,732.6 L1011.5,756.6 L1012.9,733.6 L1014.6,757.1 L1016.0,732.3 L1017.6,756.8 L1018.9,732.3 L1020.2,756.4 L1021.5,733.1 L1023.2,756.8 L1024.6,733.0 L1025.8,756.3 L1027.3,732.7 L1028.7,757.2 L1029.9,732.1 L1031.2,756.7 L1032.5,733.5 L1033.7,757.2 L1035.0,732.0 L1036.6,758.9 L1038.3,732.3 L1039.8,757.3 L1041.1,732.6 L1042.6,757.2 L1044.2,732.6 L1045.6,758.7 L1047.1,732.1 L1048.8,757.4 L1050.3,732.7 L1052.0,758.2 L1053.4,732.4 L1055.1,758.5 L1056.6,733.7 L1058.1,757.2 L1059.5,732.2 L1060.7,758.8 L1062.3,731.7 L1063.6,757.3 L1065.2,733.6 L1066.8,756.9 L1068.3,733.9 L1069.7,757.9 L1070.9,732.7 L1072.4,758.7 L1074.1,733.4 L1075.5,758.6 L1077.2,731.7 L1078.6,757.7 L1080.0,732.1 L1081.6,756.6 L1083.1,731.5 L1084.6,758.9 L1085.8,731.8 L1087.5,758.7 L1089.0,732.2 L1090.3,758.2 L1091.8,732.6 L1093.4,756.3 L1094.8,733.7 L1096.5,757.5 L1098.2,733.7 L1099.7,756.4 L1100.9,733.2 L1102.3,757.6 L1103.5,733.9 L1104.9,757.9 L1106.4,732.4 L1107.7,757.7 L1109.1,731.7 L1110.4,756.1 L1112.1,732.0 L1113.8,757.9 L1115.5,732.7 L1116.9,756.3 L1118.4,733.2 L1120.0,758.7 L1121.2,733.1 L1122.8,758.8 L1124.2,733.8 L1125.4,757.8 L1126.8,732.8 L1128.1,757.2 L1129.5,732.7 L1130.9,756.7 L1132.2,732.7 L1133.9,758.5 L1135.2,733.1 L1136.5,757.0 L1138.2,732.3 L1139.5,757.7 L1141.0,732.8 L1142.7,757.5 L1144.1,732.0 L1145.6,758.2 L1147.1,732.5 L1148.5,758.5 L1150.2,733.0 L1151.8,757.0 L1153.1,731.6 L1154.6,758.8 L1156.2,733.2 L1157.9,757.2 L1159.3,732.2 L1161.0,758.1 L1162.5,733.4 L1164.2,756.1 L1165.5,732.7 L1167.1,756.7 L1168.5,733.2 L1169.9,758.0 L1171.1,732.5 L1172.7,758.6 L1174.1,733.2 L1175.7,757.9 L1177.2,732.3 L1178.4,758.7 L1180.1,733.1 L1181.7,756.9 L1183.0,732.8 L1184.4,757.9 L1186.1,732.5 L1187.5,758.1 L1189.2,732.9 L1190.7,758.7 L1192.4,731.6 L1194.2,756.3 L1195.7,732.7 L1197.4,756.7 L1198.6,733.9 L1200.1,757.4 L1201.5,732.2 L1202.7,757.7 L1204.1,732.7 L1205.8,759.0 L1207.2,732.3 L1208.4,757.8 L1209.7,731.8 L1211.4,757.7 L1213.1,732.0 L1214.4,757.7 L1216.0,731.9 L1217.5,757.7 L1219.0,732.3 L1220.4,756.3 L1221.7,731.6 L1223.3,756.7 L1224.9,731.8 L1226.6,756.1 L1228.2,732.8 L1229.9,758.7 L1231.1,731.6 L1232.5,756.1 L1234.1,731.9 L1235.7,758.8 L1237.3,734.0 L1238.8,757.2 L1240.6,732.0 L1242.1,757.2 L1243.6,732.2 L1245.3,759.0 L1246.9,732.7 L1248.6,758.8 L1249.8,733.7 L1251.1,756.3 L1252.4,732.4 L1253.9,758.9 L1255.2,733.1 L1256.7,756.4 L1258.4,733.8 L1259.8,758.6 L1261.3,733.2 L1263.0,757.9 L1264.4,731.6 L1265.8,757.7 L1267.2,732.9 L1268.4,756.8 L1269.8,732.7 L1271.4,756.7 L1272.8,733.3 L1274.1,756.5 L1275.7,732.4 L1277.2,758.9 L1278.9,733.5 L1280.7,758.4 L1282.1,733.8 L1283.3,756.6 L1284.8,731.8 L1286.4,757.6 L1287.7,733.4 L1288.9,757.5 L1290.3,733.8 L1291.6,757.1 L1293.1,732.3 L1294.8,756.3 L1296.0,731.5 L1297.5,757.4 L1299.0,732.7 L1300.7,756.6 L1302.0,732.1 L1303.7,758.4 L1304.9,731.5 L1306.7,758.9 L1308.0,732.8 L1309.2,757.5 L1310.5,733.2 L1311.8,757.7 L1313.2,732.7 L1314.9,757.6 L1316.7,733.3 L1318.0,756.8 L1319.6,733.4" fill="none" stroke="#ff4dff" stroke-width="1.3" opacity="1.0"/><path d="M493.5,735.1 L497.3,758.3 L500.8,735.6 L504.6,751.7 L508.2,736.7 L512.7,750.8 L515.7,731.8 L520.2,756.2 L522.5,739.8 L527.4,755.9 L531.3,732.4 L533.6,754.8 L535.9,732.7 L538.8,750.3 L542.3,735.0 L546.9,754.7 L550.9,735.5 L554.9,754.1 L557.9,740.0 L562.9,757.6 L567.1,733.8 L569.9,752.6 L572.3,737.9 L575.6,757.6 L578.9,739.6 L583.5,750.0 L586.3,739.2 L589.8,758.8 L593.1,731.7 L597.1,757.0 L600.0,731.8 L603.1,758.7 L607.5,732.1 L610.4,750.9 L612.7,738.2 L615.4,755.0 L618.9,732.7 L623.1,751.2 L627.1,732.0 L630.5,751.9 L633.5,739.7 L637.9,752.7 L642.6,732.9 L645.9,757.7 L649.9,731.9 L654.9,751.9 L657.8,738.0 L660.9,752.7 L663.3,731.8 L667.1,752.2 L671.0,734.3 L674.5,758.6 L678.1,736.2 L682.7,751.6 L685.3,739.2 L689.8,752.2 L692.5,737.7 L697.4,751.8 L702.2,738.9 L706.1,753.8 L708.6,731.3 L713.5,752.1 L717.7,733.3 L722.2,755.4 L725.2,732.6 L729.4,750.6 L732.3,736.0 L736.8,755.5 L739.8,739.3 L742.6,750.1 L745.6,735.0 L747.9,751.6 L751.2,736.1 L753.7,753.3 L758.4,739.8 L762.5,756.2 L766.3,732.3 L768.6,750.2 L773.3,737.3 L778.2,750.2 L782.2,735.3 L786.5,752.9 L791.5,731.7 L795.2,756.6 L799.9,737.6 L804.1,757.1 L808.8,734.2 L813.0,758.1 L817.6,734.8 L822.0,757.8 L825.8,736.6 L829.1,755.2 L833.0,731.7 L837.0,758.9 L841.6,737.6 L844.9,756.6 L848.8,735.0 L853.3,750.8 L857.6,731.3 L861.5,754.3 L864.3,737.3 L867.9,755.5 L872.7,733.3 L874.9,752.7 L879.0,732.8 L881.7,758.2 L885.8,735.0 L890.5,752.9 L894.5,732.8 L897.9,757.3 L902.7,738.9 L906.0,755.2 L909.1,732.2 L912.6,757.5 L917.2,737.4 L922.1,752.5 L924.8,735.1 L927.7,751.9 L931.1,736.6 L934.7,752.8 L939.2,739.8 L942.7,750.7 L945.0,738.9 L947.3,756.4 L951.1,733.8 L955.5,750.2 L958.1,735.1 L960.3,757.5 L963.2,732.3 L965.5,755.7 L969.0,736.7 L973.0,757.3 L977.9,737.2 L980.7,754.3 L983.4,731.1 L986.9,756.4 L989.6,733.5 L992.8,756.3 L996.4,736.5 L1000.7,753.5 L1005.2,739.2 L1007.6,758.4 L1011.8,732.2 L1015.3,755.6 L1020.0,734.4 L1023.8,757.9 L1028.3,739.5 L1031.8,755.9 L1034.5,737.5 L1039.0,755.8 L1043.2,732.9 L1048.0,758.8 L1052.9,735.8 L1057.3,752.9 L1062.1,738.7 L1065.2,750.7 L1068.7,736.0 L1073.0,754.4 L1075.3,738.3 L1077.7,757.2 L1080.4,734.0 L1084.8,751.3 L1087.4,735.6 L1091.6,757.6 L1095.7,739.5 L1099.3,758.5 L1101.8,733.0 L1105.4,752.6 L1109.7,736.7 L1113.3,757.6 L1117.1,733.8 L1120.4,757.6 L1125.1,732.9 L1129.7,758.7 L1133.3,736.2 L1136.1,754.8 L1139.7,736.4 L1142.0,758.7 L1145.6,734.6 L1150.1,755.1 L1153.7,737.2 L1156.0,754.8 L1159.4,739.6 L1164.2,752.4 L1167.7,732.1 L1171.1,757.3 L1175.8,735.3 L1178.9,751.7 L1182.9,739.3 L1185.4,757.0 L1187.7,732.7 L1190.5,756.2 L1193.6,734.2 L1197.6,750.9 L1201.8,732.1 L1205.4,752.3 L1208.2,735.8 L1211.6,753.4 L1215.0,735.8 L1217.6,751.8 L1221.6,736.7 L1225.3,757.7 L1229.2,738.7 L1232.0,756.7 L1236.5,739.1 L1239.6,752.8 L1244.4,733.0 L1249.4,758.0 L1251.9,733.2 L1256.2,752.3 L1258.6,738.5 L1262.0,757.1 L1264.6,734.6 L1268.7,750.2 L1271.5,737.1 L1276.2,758.7 L1278.7,735.6 L1283.1,754.5 L1287.2,732.7 L1289.6,751.0 L1291.9,736.0 L1295.5,755.1 L1298.1,732.7 L1300.9,757.6 L1305.9,739.3 L1308.3,750.6 L1313.2,735.2 L1317.6,752.9" fill="none" stroke="#6f7f99" stroke-width="0.9" opacity="0.5"/><path d="M493.5,735.3 L497.5,756.0 L500.1,731.1 L503.4,752.5 L507.9,737.2 L511.7,755.0 L515.8,732.3 L519.2,751.5 L524.0,731.5 L528.5,750.7 L532.6,734.0 L535.9,757.6 L538.2,731.5 L542.9,754.6 L545.4,739.9 L550.2,751.0 L553.6,732.2 L556.7,755.6 L559.3,737.3 L561.7,751.5 L566.2,734.6 L569.6,755.4 L573.1,734.5 L575.4,756.5 L580.3,739.8 L584.3,753.2 L587.6,737.2 L591.6,751.0 L594.5,734.3 L598.1,757.3 L601.7,731.3 L606.2,753.9 L609.9,733.0 L613.3,753.5 L617.6,731.9 L621.4,751.6 L625.5,731.3 L628.5,753.1 L632.5,731.5 L636.0,751.9 L639.0,735.3 L643.9,754.3 L648.7,732.5 L653.5,753.3 L656.2,737.7 L661.0,750.1 L663.9,737.9 L667.1,752.2 L669.3,731.4 L673.3,758.9 L678.3,735.5 L680.5,752.9 L684.9,738.5 L688.9,752.1 L692.6,735.3 L696.6,752.4 L701.4,739.0 L704.1,752.6 L708.7,733.5 L713.5,754.6 L717.7,737.3 L720.5,752.6 L723.4,737.1 L727.6,751.2 L732.2,734.8 L735.1,753.9 L740.1,736.0 L744.0,758.3 L748.9,737.8 L752.3,755.3 L757.0,738.1 L760.8,753.1 L764.0,737.6 L767.8,750.2 L772.0,739.1 L776.4,758.1 L781.2,735.8 L785.6,753.4 L788.1,734.2 L791.2,758.4 L795.3,735.9 L799.2,751.1 L802.9,737.3 L806.2,752.2 L809.6,733.9 L813.7,751.3 L816.1,733.8 L820.3,756.8 L824.3,739.4 L827.6,750.3 L831.1,735.0 L833.8,756.0 L837.0,733.1 L840.1,758.5 L842.3,734.2 L845.3,751.8 L848.7,733.0 L853.5,754.5 L857.6,732.5 L861.1,755.5 L865.7,733.2 L869.2,757.7 L873.7,733.0 L877.4,756.9 L880.7,737.1 L884.8,758.8 L888.5,737.1 L891.7,756.6 L894.8,735.5 L898.0,752.8 L900.6,733.0 L904.3,752.3 L906.7,738.2 L909.7,758.4 L913.5,734.5 L918.2,758.1 L921.3,732.1 L925.3,757.6 L929.2,738.1 L932.5,755.6 L935.5,734.7 L938.7,753.5 L942.1,738.3 L944.7,751.8 L947.6,739.7 L951.3,750.5 L955.8,738.9 L960.3,753.2 L964.6,733.7 L967.2,757.8 L971.7,732.9 L976.4,750.2 L979.4,731.1 L982.1,751.5 L986.3,733.7 L989.1,751.7 L992.1,738.8 L996.0,750.9 L1000.1,735.8 L1003.6,754.7 L1007.6,738.2 L1011.2,755.7 L1014.8,736.7 L1018.0,753.7 L1021.7,737.4 L1024.7,758.3 L1028.2,738.7 L1032.4,758.6 L1036.5,734.8 L1039.8,755.5 L1044.1,738.6 L1046.7,750.6 L1049.2,731.8 L1051.6,750.1 L1054.5,732.0 L1058.6,755.5 L1063.5,739.6 L1067.8,758.5 L1070.0,733.1 L1074.8,754.3 L1077.6,737.8 L1081.0,754.9 L1084.1,733.2 L1086.5,755.5 L1091.4,739.9 L1095.7,758.4 L1099.0,733.7 L1103.7,755.4 L1107.8,731.1 L1110.7,754.3 L1114.9,738.4 L1119.2,753.1 L1122.5,738.8 L1127.5,754.4 L1130.2,736.6 L1133.9,753.3 L1136.8,734.5 L1140.7,751.1 L1144.4,739.6 L1148.7,752.3 L1152.0,731.9 L1156.3,755.7 L1159.0,735.9 L1162.9,755.2 L1166.1,733.8 L1169.3,759.0 L1172.4,735.5 L1175.9,751.6 L1179.2,732.8 L1182.3,753.3 L1185.5,739.4 L1188.6,753.0 L1192.6,734.6 L1196.2,755.8 L1198.6,737.0 L1201.1,752.3 L1205.6,739.9 L1209.7,751.5 L1213.1,733.5 L1217.7,752.1 L1220.4,736.7 L1224.4,755.3 L1227.9,739.6 L1231.4,758.4 L1234.7,735.2 L1237.9,756.4 L1242.2,733.2 L1245.9,756.5 L1249.5,737.0 L1253.4,756.4 L1256.6,733.8 L1258.9,758.0 L1263.3,734.5 L1268.2,758.1 L1270.8,738.5 L1274.2,752.8 L1277.1,734.7 L1279.5,750.5 L1282.0,733.8 L1284.7,751.1 L1289.2,734.4 L1292.8,755.4 L1297.6,732.3 L1300.4,757.7 L1305.2,739.4 L1308.8,753.3 L1311.6,739.2 L1315.9,755.0" fill="none" stroke="#ff6a35" stroke-width="0.9" opacity="0.5"/><rect x="520.0" y="729.5" width="1.5" height="3" fill="#fff"/><rect x="536.2" y="729.5" width="1.5" height="3" fill="#fff"/><rect x="556.2" y="729.5" width="1.5" height="3" fill="#fff"/><rect x="565.6" y="729.5" width="1.5" height="3" fill="#fff"/><rect x="574.9" y="729.5" width="1.5" height="3" fill="#fff"/><rect x="587.5" y="729.5" width="1.5" height="3" fill="#fff"/><rect x="610.4" y="729.5" width="1.5" height="3" fill="#fff"/><rect x="627.8" y="729.5" width="1.5" height="3" fill="#fff"/><rect x="642.8" y="729.5" width="1.5" height="3" fill="#fff"/><rect x="663.6" y="729.5" width="1.5" height="3" fill="#fff"/><rect x="681.6" y="729.5" width="1.5" height="3" fill="#fff"/><rect x="696.2" y="729.5" width="1.5" height="3" fill="#fff"/><rect x="721.7" y="729.5" width="1.5" height="3" fill="#fff"/><rect x="745.1" y="729.5" width="1.5" height="3" fill="#fff"/><rect x="758.4" y="729.5" width="1.5" height="3" fill="#fff"/><rect x="779.1" y="729.5" width="1.5" height="3" fill="#fff"/><rect x="798.6" y="729.5" width="1.5" height="3" fill="#fff"/><rect x="825.9" y="729.5" width="1.5" height="3" fill="#fff"/><rect x="849.9" y="729.5" width="1.5" height="3" fill="#fff"/><rect x="864.3" y="729.5" width="1.5" height="3" fill="#fff"/><rect x="893.8" y="729.5" width="1.5" height="3" fill="#fff"/><rect x="904.4" y="729.5" width="1.5" height="3" fill="#fff"/><rect x="921.6" y="729.5" width="1.5" height="3" fill="#fff"/><rect x="946.3" y="729.5" width="1.5" height="3" fill="#fff"/><rect x="957.6" y="729.5" width="1.5" height="3" fill="#fff"/><rect x="976.4" y="729.5" width="1.5" height="3" fill="#fff"/><rect x="985.2" y="729.5" width="1.5" height="3" fill="#fff"/><rect x="1007.9" y="729.5" width="1.5" height="3" fill="#fff"/><rect x="1032.8" y="729.5" width="1.5" height="3" fill="#fff"/><rect x="1053.4" y="729.5" width="1.5" height="3" fill="#fff"/><rect x="1080.6" y="729.5" width="1.5" height="3" fill="#fff"/><rect x="1095.5" y="729.5" width="1.5" height="3" fill="#fff"/><rect x="1118.8" y="729.5" width="1.5" height="3" fill="#fff"/><rect x="1139.9" y="729.5" width="1.5" height="3" fill="#fff"/><rect x="1160.7" y="729.5" width="1.5" height="3" fill="#fff"/><rect x="1178.7" y="729.5" width="1.5" height="3" fill="#fff"/><rect x="1205.2" y="729.5" width="1.5" height="3" fill="#fff"/><rect x="1234.0" y="729.5" width="1.5" height="3" fill="#fff"/><rect x="1252.4" y="729.5" width="1.5" height="3" fill="#fff"/><rect x="1275.0" y="729.5" width="1.5" height="3" fill="#fff"/><rect x="1284.3" y="729.5" width="1.5" height="3" fill="#fff"/><rect x="1307.8" y="729.5" width="1.5" height="3" fill="#fff"/><rect x="1317.5" y="737" width="4" height="19" rx="1" fill="#222"/><line x1="1320" y1="729" x2="1320" y2="768" stroke="#555" stroke-width="1"/><line x1="493" y1="773.9" x2="1322" y2="773.9" stroke="#777" stroke-width="1.6"/><line x1="493.5" y1="774" x2="493.5" y2="777.5" stroke="#555" stroke-width="1.3"/><line x1="540.4" y1="774" x2="540.4" y2="777.5" stroke="#555" stroke-width="1.3"/><line x1="675.5" y1="774" x2="675.5" y2="777.5" stroke="#555" stroke-width="1.3"/><line x1="815.2" y1="774" x2="815.2" y2="777.5" stroke="#555" stroke-width="1.3"/><line x1="950" y1="774" x2="950" y2="777.5" stroke="#555" stroke-width="1.3"/><line x1="1089.5" y1="774" x2="1089.5" y2="777.5" stroke="#555" stroke-width="1.3"/><line x1="1229" y1="774" x2="1229" y2="777.5" stroke="#555" stroke-width="1.3"/><line x1="1321.5" y1="774" x2="1321.5" y2="777.5" stroke="#555" stroke-width="1.3"/></svg>
<div class="t" style="left:340.4px;width:400px;text-align:center;top:780.03px;font-size:10px;line-height:10px;color:#333;font-weight:400;">Sep</div>
<div class="t" style="left:475.5px;width:400px;text-align:center;top:780.03px;font-size:10px;line-height:10px;color:#333;font-weight:400;">Oct</div>
<div class="t" style="left:615.2px;width:400px;text-align:center;top:780.03px;font-size:10px;line-height:10px;color:#333;font-weight:400;">Nov</div>
<div class="t" style="left:750px;width:400px;text-align:center;top:780.03px;font-size:10px;line-height:10px;color:#333;font-weight:400;">Dec</div>
<div class="t" style="left:889.5px;width:400px;text-align:center;top:780.03px;font-size:10px;line-height:10px;color:#333;font-weight:400;">2022</div>
<div class="t" style="left:1029px;width:400px;text-align:center;top:780.03px;font-size:10px;line-height:10px;color:#333;font-weight:400;">Feb</div>
<div class="a" style="left:493.4px;top:798.4px;width:244px;height:22.8px;background:#fff;border:1px solid #dcdcdc;border-radius:3px;box-sizing:border-box;"></div>
<div class="a" style="left:632.8px;top:799.4px;width:35.5px;height:20.8px;background:#eef4fb;"></div>
<div class="a" style="left:526.3px;top:799px;width:1px;height:21.5px;background:#e0e0e0;"></div>
<div class="a" style="left:563.1px;top:799px;width:1px;height:21.5px;background:#e0e0e0;"></div>
<div class="a" style="left:598px;top:799px;width:1px;height:21.5px;background:#e0e0e0;"></div>
<div class="a" style="left:632.8px;top:799px;width:1px;height:21.5px;background:#e0e0e0;"></div>
<div class="a" style="left:668.3px;top:799px;width:1px;height:21.5px;background:#e0e0e0;"></div>
<div class="a" style="left:699.8px;top:799px;width:1px;height:21.5px;background:#e0e0e0;"></div>
<div class="t" style="left:309.84999999999997px;width:400px;text-align:center;top:804.34px;font-size:12px;line-height:12px;color:#333;font-weight:400;">1D</div>
<div class="t" style="left:344.70000000000005px;width:400px;text-align:center;top:804.34px;font-size:12px;line-height:12px;color:#333;font-weight:400;">1W</div>
<div class="t" style="left:380.54999999999995px;width:400px;text-align:center;top:804.34px;font-size:12px;line-height:12px;color:#333;font-weight:400;">1M</div>
<div class="t" style="left:415.4px;width:400px;text-align:center;top:804.34px;font-size:12px;line-height:12px;color:#333;font-weight:400;">3M</div>
<div class="t" style="left:450.54999999999995px;width:400px;text-align:center;top:804.34px;font-size:12px;line-height:12px;color:#2a6cc4;font-weight:400;">6M</div>
<div class="t" style="left:484.04999999999995px;width:400px;text-align:center;top:804.34px;font-size:12px;line-height:12px;color:#333;font-weight:400;">1Y</div>
<div class="t" style="left:518.5999999999999px;width:400px;text-align:center;top:804.34px;font-size:12px;line-height:12px;color:#333;font-weight:400;">ALL</div>
<div class="a" style="left:753.6px;top:798.4px;width:103.2px;height:22.8px;background:#fff;border:1px solid #dcdcdc;border-radius:3px;box-sizing:border-box;"></div>
<div class="a" style="left:833.7px;top:799px;width:1px;height:21.5px;background:#e0e0e0;"></div>
<div class="t" style="left:762.5px;top:803.90px;font-size:11.7px;line-height:11.7px;color:#333;font-weight:400;">CUSTOM</div>
<svg class="a" style="left:818px;top:805px;" width="10" height="6" viewBox="0 0 10 6"><polygon points="0,5 10,5 5,0" fill="#aaa"/></svg>
<svg class="a" style="left:839px;top:803px;" width="13" height="13" viewBox="0 0 13 13"><rect x="1" y="2" width="11" height="9" fill="none" stroke="#555" stroke-width="1.1"/><rect x="3" y="4" width="1.5" height="1.5" fill="#555"/><rect x="8.5" y="7.5" width="1.5" height="1.5" fill="#555"/></svg>
<div class="a" style="left:124px;top:389px;width:290px;height:363px;background:#fff;border:1px solid #e3e3e3;box-sizing:border-box;"></div>
<div class="a" style="left:140.2px;top:404.5px;width:24.3px;height:24.3px;background:#fff;border:1px solid #dcdcdc;border-radius:3px;box-sizing:border-box;"></div>
<div class="a" style="left:142.7px;top:407.0px;width:19.3px;height:19.3px;background:#1f2060;"></div>
<div class="a" style="left:169.2px;top:404.5px;width:24.3px;height:24.3px;background:#fff;border:1px solid #dcdcdc;border-radius:3px;box-sizing:border-box;"></div>
<div class="a" style="left:171.7px;top:407.0px;width:19.3px;height:19.3px;background:#4a5866;"></div>
<div class="a" style="left:198.2px;top:404.5px;width:24.3px;height:24.3px;background:#fff;border:1px solid #dcdcdc;border-radius:3px;box-sizing:border-box;"></div>
<div class="a" style="left:200.7px;top:407.0px;width:19.3px;height:19.3px;background:#3a3daa;"></div>
<div class="a" style="left:227.2px;top:404.5px;width:24.3px;height:24.3px;background:#fff;border:1px solid #dcdcdc;border-radius:3px;box-sizing:border-box;"></div>
<div class="a" style="left:229.7px;top:407.0px;width:19.3px;height:19.3px;background:#006291;"></div>
<div class="a" style="left:256.2px;top:404.5px;width:24.3px;height:24.3px;background:#fff;border:1px solid #dcdcdc;border-radius:3px;box-sizing:border-box;"></div>
<div class="a" style="left:258.7px;top:407.0px;width:19.3px;height:19.3px;background:#80bfff;"></div>
<div class="a" style="left:285.2px;top:404.5px;width:24.3px;height:24.3px;background:#fff;border:1px solid #dcdcdc;border-radius:3px;box-sizing:border-box;"></div>
<div class="a" style="left:287.7px;top:407.0px;width:19.3px;height:19.3px;background:#800000;"></div>
<div class="a" style="left:314.2px;top:404.5px;width:24.3px;height:24.3px;background:#fff;border:1px solid #dcdcdc;border-radius:3px;box-sizing:border-box;"></div>
<div class="a" style="left:316.7px;top:407.0px;width:19.3px;height:19.3px;background:#b21c00;"></div>
<div class="a" style="left:343.2px;top:404.5px;width:24.3px;height:24.3px;background:#fff;border:1px solid #dcdcdc;border-radius:3px;box-sizing:border-box;"></div>
<div class="a" style="left:345.7px;top:407.0px;width:19.3px;height:19.3px;background:#c2006b;"></div>
<div class="a" style="left:372.2px;top:404.5px;width:24.3px;height:24.3px;background:#fff;border:1px solid #2466c0;border-radius:3px;box-sizing:border-box;"></div>
<div class="a" style="left:374.7px;top:407.0px;width:19.3px;height:19.3px;background:#ff4800;"></div>
<div class="a" style="left:140.2px;top:433.5px;width:24.3px;height:24.3px;background:#fff;border:1px solid #dcdcdc;border-radius:3px;box-sizing:border-box;"></div>
<div class="a" style="left:142.7px;top:436.0px;width:19.3px;height:19.3px;background:#ff9e3b;"></div>
<div class="a" style="left:169.2px;top:433.5px;width:24.3px;height:24.3px;background:#fff;border:1px solid #dcdcdc;border-radius:3px;box-sizing:border-box;"></div>
<div class="a" style="left:171.7px;top:436.0px;width:19.3px;height:19.3px;background:#ffc97d;"></div>
<div class="a" style="left:198.2px;top:433.5px;width:24.3px;height:24.3px;background:#fff;border:1px solid #dcdcdc;border-radius:3px;box-sizing:border-box;"></div>
<div class="a" style="left:200.7px;top:436.0px;width:19.3px;height:19.3px;background:#003a36;"></div>
<div class="a" style="left:227.2px;top:433.5px;width:24.3px;height:24.3px;background:#fff;border:1px solid #dcdcdc;border-radius:3px;box-sizing:border-box;"></div>
<div class="a" style="left:229.7px;top:436.0px;width:19.3px;height:19.3px;background:#2e8000;"></div>
<div class="a" style="left:256.2px;top:433.5px;width:24.3px;height:24.3px;background:#fff;border:1px solid #dcdcdc;border-radius:3px;box-sizing:border-box;"></div>
<div class="a" style="left:258.7px;top:436.0px;width:19.3px;height:19.3px;background:#009688;"></div>
<div class="a" style="left:285.2px;top:433.5px;width:24.3px;height:24.3px;background:#fff;border:1px solid #dcdcdc;border-radius:3px;box-sizing:border-box;"></div>
<div class="a" style="left:287.7px;top:436.0px;width:19.3px;height:19.3px;background:#55007f;"></div>
<div class="a" style="left:314.2px;top:433.5px;width:24.3px;height:24.3px;background:#fff;border:1px solid #dcdcdc;border-radius:3px;box-sizing:border-box;"></div>
<div class="a" style="left:316.7px;top:436.0px;width:19.3px;height:19.3px;background:#ff00ff;"></div>
<div class="a" style="left:343.2px;top:433.5px;width:24.3px;height:24.3px;background:#fff;border:1px solid #dcdcdc;border-radius:3px;box-sizing:border-box;"></div>
<div class="a" style="left:345.7px;top:436.0px;width:19.3px;height:19.3px;background:#555555;"></div>
<div class="a" style="left:372.2px;top:433.5px;width:24.3px;height:24.3px;background:#fff;border:1px solid #dcdcdc;border-radius:3px;box-sizing:border-box;"></div>
<div class="a" style="left:374.7px;top:436.0px;width:19.3px;height:19.3px;background:#7d716b;"></div>
<div class="a" style="left:125px;top:473px;width:288px;height:1px;background:#e6e6e6;"></div>
<div class="a" style="left:136px;top:485px;width:266px;height:130px;background:linear-gradient(to bottom, rgba(0,0,0,0), #000), linear-gradient(to right, #fff, #ff4900);"></div>
<div class="a" style="left:394.5px;top:477.5px;width:15px;height:15px;border:2px solid #1a1a1a;border-radius:50%;box-sizing:border-box;"></div>
<div class="a" style="left:152.5px;top:632px;width:38px;height:38px;background:#ff4a00;border-radius:50%;box-shadow:0 0 0 1.5px #f3d3c8;"></div>
<div class="a" style="left:226px;top:643.2px;width:142px;height:16.3px;background:linear-gradient(to right,#f00 0%,#ff0 17%,#0f0 33%,#0ff 50%,#00f 67%,#f0f 83%,#f00 100%);"></div>
<div class="a" style="left:225.5px;top:644px;width:14px;height:14px;background:#ff3a00;border:2px solid #222;border-radius:50%;box-sizing:border-box;"></div>
<div class="a" style="left:152.3px;top:690.6px;width:67.0px;height:25.8px;background:#fff;border:1px solid #dcdcdc;border-radius:3px;box-sizing:border-box;"></div>
<div class="t" style="left:-14.199999999999989px;width:400px;text-align:center;top:697.50px;font-size:13px;line-height:13px;color:#2b2b2b;font-weight:400;">255</div>
<div class="t" style="left:-14.199999999999989px;width:400px;text-align:center;top:726.69px;font-size:11px;line-height:11px;color:#555;font-weight:400;">R</div>
<div class="a" style="left:227.7px;top:690.6px;width:66.5px;height:25.8px;background:#fff;border:1px solid #dcdcdc;border-radius:3px;box-sizing:border-box;"></div>
<div class="t" style="left:60.94999999999999px;width:400px;text-align:center;top:697.50px;font-size:13px;line-height:13px;color:#2b2b2b;font-weight:400;">73</div>
<div class="t" style="left:60.94999999999999px;width:400px;text-align:center;top:726.69px;font-size:11px;line-height:11px;color:#555;font-weight:400;">G</div>
<div class="a" style="left:302.8px;top:690.6px;width:66.80000000000001px;height:25.8px;background:#fff;border:1px solid #dcdcdc;border-radius:3px;box-sizing:border-box;"></div>
<div class="t" style="left:136.20000000000005px;width:400px;text-align:center;top:697.50px;font-size:13px;line-height:13px;color:#2b2b2b;font-weight:400;">0</div>
<div class="t" style="left:136.20000000000005px;width:400px;text-align:center;top:726.69px;font-size:11px;line-height:11px;color:#555;font-weight:400;">B</div>
<svg class="a" style="left:376px;top:695px;" width="10" height="18" viewBox="0 0 10 18"><polygon points="5,1 9.5,7.5 0.5,7.5" fill="#333"/><polygon points="0.5,10.5 9.5,10.5 5,17" fill="#333"/></svg>
<div class="a" style="left:419.3px;top:437.2px;width:14.8px;height:36.3px;background:#fff;border:1px solid #e0e0e0;border-radius:3px 3px 0 0;box-sizing:border-box;"></div>
<div class="a" style="left:424.1px;top:444px;width:1.8px;height:22px;background:#c6c6c6;"></div>
<div class="a" style="left:427.1px;top:444px;width:1.8px;height:22px;background:#c6c6c6;"></div>
<div class="a" style="left:419.3px;top:472.5px;width:14.8px;height:16px;background:#fff;border:1px solid #e0e0e0;border-radius:0 0 3px 3px;box-sizing:border-box;"></div>
<svg class="a" style="left:422.5px;top:477px;" width="9" height="9" viewBox="0 0 9 9"><line x1="1.3" y1="1.3" x2="6.7" y2="6.7" stroke="#aaa" stroke-width="1"/><line x1="6.7" y1="1.3" x2="1.3" y2="6.7" stroke="#aaa" stroke-width="1"/></svg>
<svg class="a" style="left:110px;top:375px;" width="320" height="390" viewBox="0 0 320 390"><rect x="12" y="12.8" width="293.9" height="366.1" fill="none" stroke="#7000ff" stroke-width="2.2" stroke-dasharray="11.6,3.7" stroke-dashoffset="6"/></svg>
<svg class="a" style="left:105px;top:345px;" width="50" height="50" viewBox="0 0 50 50"><rect x="10.2" y="12.3" width="27.4" height="26.9" fill="none" stroke="#7000ff" stroke-width="2.4" stroke-dasharray="20.5,6.7" stroke-dashoffset="10.2"/></svg>
<div class="a" style="left:258.4px;top:274.6px;width:149px;height:30.3px;background:#fff;border:2px solid #7000ff;border-radius:6px;box-sizing:border-box;"></div>
<div class="t" style="left:133px;width:400px;text-align:center;top:283.47px;font-size:14.8px;line-height:14.8px;color:#7000ff;font-weight:700;">Color option</div>
<svg class="a" style="left:140px;top:280px;" width="125" height="85" viewBox="0 0 125 85"><line x1="118.5" y1="9.5" x2="12" y2="71.5" stroke="#7000ff" stroke-width="2"/><polyline points="14.5,62.5 11.3,71.8 21.2,74.3" fill="none" stroke="#7000ff" stroke-width="2" stroke-linecap="round" stroke-linejoin="round"/></svg>
</div></body></html>
